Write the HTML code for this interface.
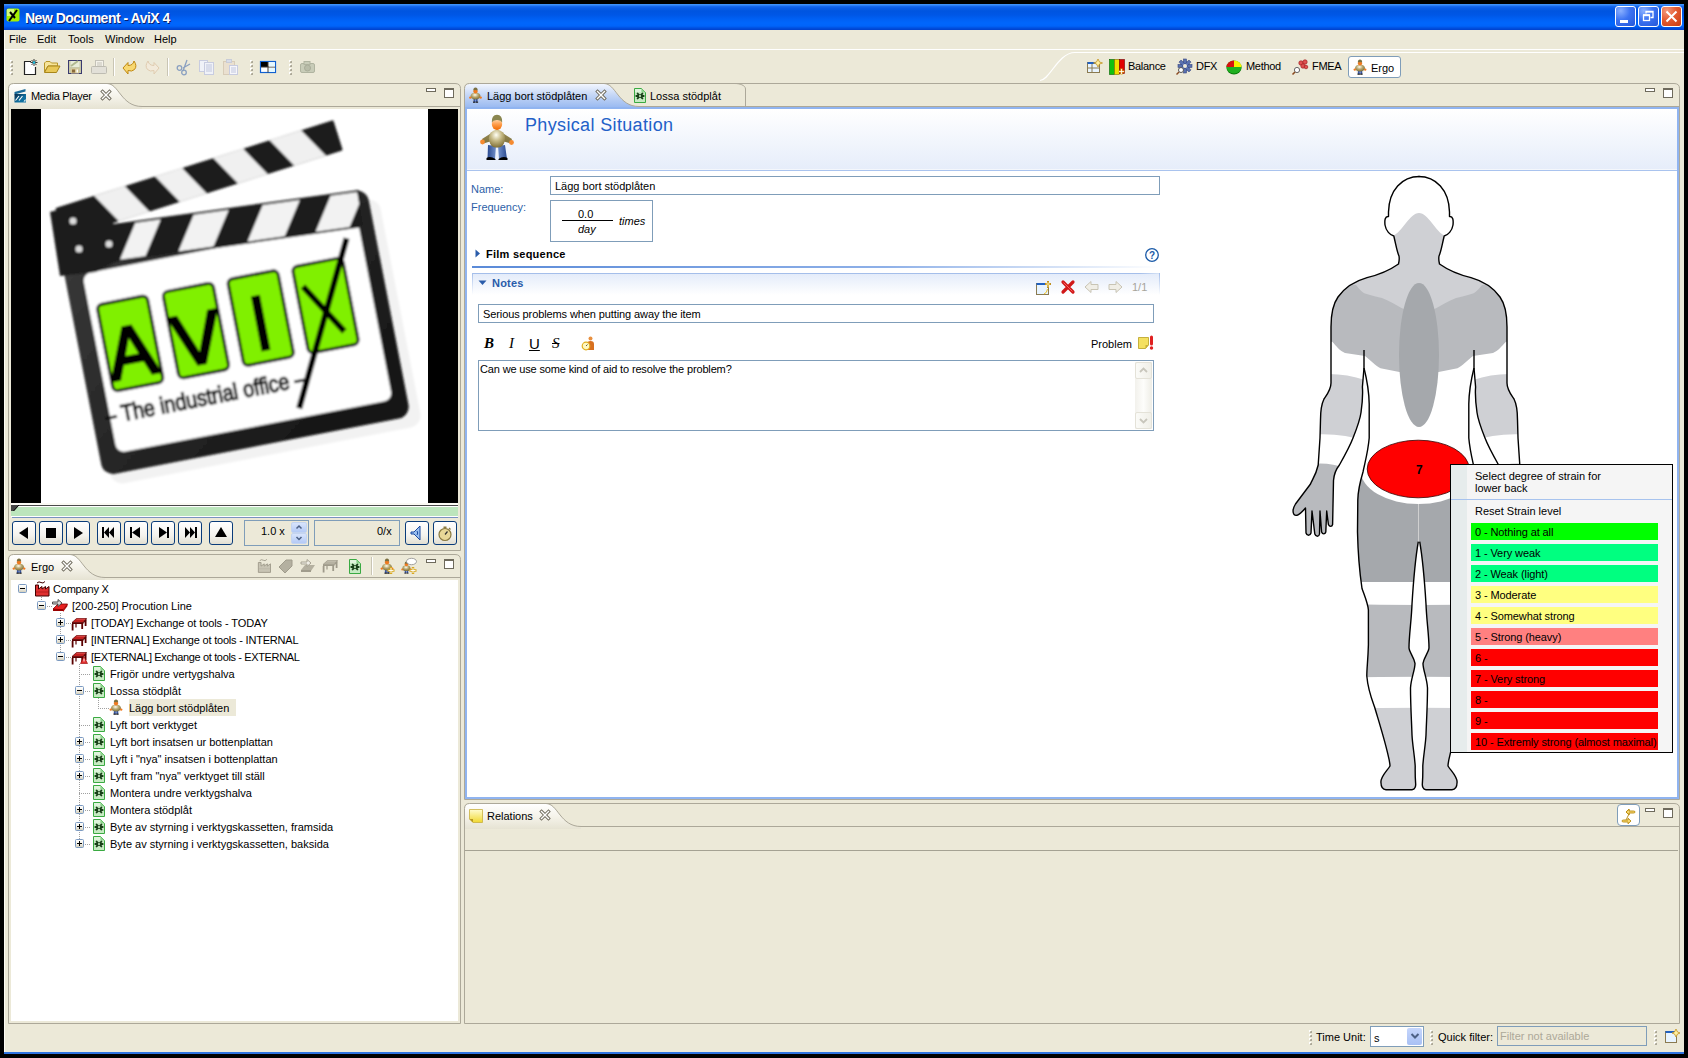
<!DOCTYPE html>
<html><head><meta charset="utf-8">
<style>
*{box-sizing:border-box;margin:0;padding:0}
html,body{width:1688px;height:1058px;overflow:hidden;background:#000}
body{position:relative;font-family:"Liberation Sans",sans-serif;font-size:11px;color:#000}
.a{position:absolute}
.t{position:absolute;white-space:nowrap;line-height:13px}
svg{position:absolute;overflow:visible}
</style></head><body>
<div class="a" style="left:4px;top:4px;width:1680px;height:1050px;background:#ECE9D8;"></div>
<div class="a" style="left:4px;top:30px;width:1px;height:1022px;background:#FCFBF3;"></div>
<div class="a" style="left:4px;top:1052px;width:1680px;height:2px;background:#2F74E0;"></div>
<div class="a" style="left:4px;top:4px;width:1680px;height:26px;background:linear-gradient(#3D90FA 0px,#3D90FA 1px,#1A6CF0 2px,#0A5CE6 4px,#0055E0 7px,#0057E6 11px,#0060F4 15px,#0066FC 19px,#0064FA 22px,#0050E0 24px,#0040CC 26px);"></div>
<svg style="left:6px;top:8px;" width="15" height="15" viewBox="0 0 15 15"><rect x="0.5" y="0.5" width="13" height="13" rx="2" fill="#A6F000"/><rect x="1" y="1" width="7" height="7" fill="#E8FFB0" opacity=".7"/><path d="M3,13 L11,2" stroke="#000" stroke-width="2"/><path d="M4,4 L9,10" stroke="#000" stroke-width="2"/></svg>
<div class="t" style="left:25px;top:10px;font-size:14px;line-height:17px;color:#fff;font-weight:700;text-shadow:1px 1px 0 #0A1E6E;letter-spacing:-.5px;">New Document - AviX 4</div>
<div class="a" style="left:1615px;top:6px;width:21px;height:21px;background:radial-gradient(circle at 25% 20%,#8AB0FF 0,#3C73F2 45%,#2457D8 100%);border:1px solid #fff;border-radius:3px;"></div>
<div class="a" style="left:1638px;top:6px;width:21px;height:21px;background:radial-gradient(circle at 25% 20%,#8AB0FF 0,#3C73F2 45%,#2457D8 100%);border:1px solid #fff;border-radius:3px;"></div>
<div class="a" style="left:1661px;top:6px;width:21px;height:21px;background:radial-gradient(circle at 25% 20%,#F39A7E 0,#E45B32 45%,#C83C10 100%);border:1px solid #fff;border-radius:3px;"></div>
<div class="a" style="left:1620px;top:20px;width:8px;height:3px;background:#fff;"></div>
<svg style="left:1638px;top:6px;" width="21" height="21" viewBox="0 0 21 21"><rect x="5.5" y="9.5" width="6" height="5" fill="none" stroke="#fff" stroke-width="1.3"/><path d="M5,9 h7 M8,7.5 V5.5 h7 v6 h-2.5" fill="none" stroke="#fff" stroke-width="1.3"/><rect x="5" y="8.5" width="7" height="1.5" fill="#fff"/><rect x="8" y="5" width="7" height="1.5" fill="#fff"/></svg>
<svg style="left:1661px;top:6px;" width="21" height="21" viewBox="0 0 21 21"><path d="M5.5,5.5 L15.5,15.5 M15.5,5.5 L5.5,15.5" stroke="#fff" stroke-width="2"/></svg>
<div class="a" style="left:4px;top:49px;width:1680px;height:1px;background:#FFFFFF;"></div>
<div class="t" style="left:9px;top:33px;font-size:11px;line-height:13px;color:#000;">File</div>
<div class="t" style="left:37px;top:33px;font-size:11px;line-height:13px;color:#000;">Edit</div>
<div class="t" style="left:68px;top:33px;font-size:11px;line-height:13px;color:#000;">Tools</div>
<div class="t" style="left:105px;top:33px;font-size:11px;line-height:13px;color:#000;">Window</div>
<div class="t" style="left:154px;top:33px;font-size:11px;line-height:13px;color:#000;">Help</div>
<div class="a" style="left:11px;top:61px;width:2px;height:2px;background:#ACA899;"></div>
<div class="a" style="left:10px;top:60px;width:2px;height:2px;background:#FFFFFF;"></div>
<div class="a" style="left:11px;top:61px;width:1px;height:1px;background:#C8C4B2;"></div>
<div class="a" style="left:11px;top:65px;width:2px;height:2px;background:#ACA899;"></div>
<div class="a" style="left:10px;top:64px;width:2px;height:2px;background:#FFFFFF;"></div>
<div class="a" style="left:11px;top:65px;width:1px;height:1px;background:#C8C4B2;"></div>
<div class="a" style="left:11px;top:69px;width:2px;height:2px;background:#ACA899;"></div>
<div class="a" style="left:10px;top:68px;width:2px;height:2px;background:#FFFFFF;"></div>
<div class="a" style="left:11px;top:69px;width:1px;height:1px;background:#C8C4B2;"></div>
<div class="a" style="left:11px;top:73px;width:2px;height:2px;background:#ACA899;"></div>
<div class="a" style="left:10px;top:72px;width:2px;height:2px;background:#FFFFFF;"></div>
<div class="a" style="left:11px;top:73px;width:1px;height:1px;background:#C8C4B2;"></div>
<svg style="left:23px;top:59px;" width="16" height="16" viewBox="0 0 16 16"><path d="M1.5,2.5 H8 M1.5,2.5 V15.5 H12.5 V8" fill="#fff" stroke="#222"/><rect x="2" y="3" width="10" height="12" fill="#fff"/><path d="M1.5,2.5 H8 M1.5,2.5 V15.5 H12.5 V8" fill="none" stroke="#222" stroke-width="1.2"/><path d="M11,0 V7 M7.5,3.5 H14.5 M8.5,1 L13.5,6 M13.5,1 L8.5,6" stroke="#222" stroke-width=".9"/><circle cx="11" cy="3.5" r="1.3" fill="#20C0E0"/></svg>
<svg style="left:44px;top:59px;" width="17" height="16" viewBox="0 0 17 16"><path d="M0.5,4 L2,2.5 H6 L7.5,4 H13.5 V7 H4 L0.5,13 Z" fill="#F6E49A" stroke="#B8962A"/><path d="M0.5,13.5 L4,7 H16 L12.5,13.5 Z" fill="#E8C858" stroke="#A8861A"/></svg>
<svg style="left:68px;top:59px;" width="15" height="16" viewBox="0 0 15 16"><rect x="0.5" y="1.5" width="13" height="13" fill="#C8C8A8" stroke="#3A3A70"/><rect x="2.5" y="2" width="9" height="6" fill="#E8ECD8"/><path d="M3,7 L10,2" stroke="#B0B890" stroke-width="2"/><rect x="3" y="9.5" width="8" height="5" fill="#D8C898"/><rect x="4" y="10.5" width="3" height="3" fill="#8A6A3A"/><rect x="8.5" y="10.5" width="1.5" height="3" fill="#fff"/></svg>
<svg style="left:91px;top:59px;" width="16" height="16" viewBox="0 0 16 16"><rect x="4.5" y="1.5" width="8" height="6" fill="#F4F2EA" stroke="#C4C2B8"/><rect x="0.5" y="7.5" width="15" height="7" rx="1" fill="#E2E0D8" stroke="#BEBCB2"/><path d="M6,4 H11 M6,6 H11" stroke="#C4C2B8"/></svg>
<div class="a" style="left:113px;top:58px;width:1px;height:18px;background:#C9C5B4;"></div>
<div class="a" style="left:114px;top:58px;width:1px;height:18px;background:#FFFFFF;"></div>
<svg style="left:122px;top:59px;" width="16" height="16" viewBox="0 0 16 16"><path d="M1,9 L6,3.5 V6.5 Q11,6.5 12,2 Q15.5,7 12.5,10.5 Q10,13 6,11.5 V15 Z" fill="#F8D870" stroke="#C08810" stroke-width="1"/></svg>
<svg style="left:144px;top:59px;" width="16" height="16" viewBox="0 0 16 16"><path d="M15,9 L10,3.5 V6.5 Q5,6.5 4,2 Q0.5,7 3.5,10.5 Q6,13 10,11.5 V15 Z" fill="#F2EADA" stroke="#E0CCB0" stroke-width="1"/></svg>
<div class="a" style="left:167px;top:58px;width:1px;height:18px;background:#C9C5B4;"></div>
<div class="a" style="left:168px;top:58px;width:1px;height:18px;background:#FFFFFF;"></div>
<svg style="left:176px;top:59px;" width="15" height="16" viewBox="0 0 15 16"><path d="M7,12 L11,1 M7,9 L14,5" stroke="#8AA0C0" stroke-width="1.3"/><circle cx="3.5" cy="9" r="2.3" fill="none" stroke="#8AA0C0" stroke-width="1.3"/><circle cx="8" cy="13.5" r="2.3" fill="none" stroke="#8AA0C0" stroke-width="1.3"/></svg>
<svg style="left:199px;top:59px;" width="16" height="16" viewBox="0 0 16 16"><rect x="0.5" y="1.5" width="8" height="11" fill="#F0F2F8" stroke="#C8CCE0"/><rect x="5.5" y="3.5" width="9" height="12" fill="#F0F2F8" stroke="#C8CCE0"/><path d="M7,6 H13 M7,8 H13 M7,10 H13 M7,12 H13" stroke="#C0C6DE"/></svg>
<svg style="left:223px;top:59px;" width="16" height="16" viewBox="0 0 16 16"><rect x="0.5" y="2.5" width="11" height="13" fill="#EAE0D0" stroke="#D8CCB8"/><rect x="3.5" y="0.5" width="5" height="3" fill="#D8DCE8" stroke="#C8CCD8"/><rect x="6.5" y="6.5" width="8" height="9" fill="#F6F6FA" stroke="#C8CCE0"/><path d="M8,9 H13 M8,11 H13 M8,13 H13" stroke="#C0C6DE"/></svg>
<div class="a" style="left:251px;top:61px;width:2px;height:2px;background:#ACA899;"></div>
<div class="a" style="left:250px;top:60px;width:2px;height:2px;background:#FFFFFF;"></div>
<div class="a" style="left:251px;top:61px;width:1px;height:1px;background:#C8C4B2;"></div>
<div class="a" style="left:251px;top:65px;width:2px;height:2px;background:#ACA899;"></div>
<div class="a" style="left:250px;top:64px;width:2px;height:2px;background:#FFFFFF;"></div>
<div class="a" style="left:251px;top:65px;width:1px;height:1px;background:#C8C4B2;"></div>
<div class="a" style="left:251px;top:69px;width:2px;height:2px;background:#ACA899;"></div>
<div class="a" style="left:250px;top:68px;width:2px;height:2px;background:#FFFFFF;"></div>
<div class="a" style="left:251px;top:69px;width:1px;height:1px;background:#C8C4B2;"></div>
<div class="a" style="left:251px;top:73px;width:2px;height:2px;background:#ACA899;"></div>
<div class="a" style="left:250px;top:72px;width:2px;height:2px;background:#FFFFFF;"></div>
<div class="a" style="left:251px;top:73px;width:1px;height:1px;background:#C8C4B2;"></div>
<svg style="left:260px;top:61px;" width="16" height="13" viewBox="0 0 16 13"><rect x="0.5" y="0.5" width="15" height="11" fill="#fff" stroke="#1060D0" stroke-width="1.2"/><rect x="1" y="1" width="7" height="5" fill="#000"/><path d="M8,1 V11.5 M1,6 H15" stroke="#403830" stroke-width="1"/><rect x="9" y="1.5" width="6" height="4" fill="#E4F8FF"/><rect x="9" y="7" width="6" height="4" fill="#E4F8FF"/></svg>
<div class="a" style="left:290px;top:61px;width:2px;height:2px;background:#ACA899;"></div>
<div class="a" style="left:289px;top:60px;width:2px;height:2px;background:#FFFFFF;"></div>
<div class="a" style="left:290px;top:61px;width:1px;height:1px;background:#C8C4B2;"></div>
<div class="a" style="left:290px;top:65px;width:2px;height:2px;background:#ACA899;"></div>
<div class="a" style="left:289px;top:64px;width:2px;height:2px;background:#FFFFFF;"></div>
<div class="a" style="left:290px;top:65px;width:1px;height:1px;background:#C8C4B2;"></div>
<div class="a" style="left:290px;top:69px;width:2px;height:2px;background:#ACA899;"></div>
<div class="a" style="left:289px;top:68px;width:2px;height:2px;background:#FFFFFF;"></div>
<div class="a" style="left:290px;top:69px;width:1px;height:1px;background:#C8C4B2;"></div>
<div class="a" style="left:290px;top:73px;width:2px;height:2px;background:#ACA899;"></div>
<div class="a" style="left:289px;top:72px;width:2px;height:2px;background:#FFFFFF;"></div>
<div class="a" style="left:290px;top:73px;width:1px;height:1px;background:#C8C4B2;"></div>
<svg style="left:300px;top:59px;" width="16" height="16" viewBox="0 0 16 16"><rect x="0.5" y="4.5" width="14" height="9" rx="1.5" fill="#C8CCB8" stroke="#B0B4A0"/><rect x="4" y="2.5" width="6" height="3" fill="#C8CCB8" stroke="#B0B4A0"/><circle cx="7.5" cy="9" r="3" fill="#B8BCA8" stroke="#A8AC98"/></svg>
<svg style="left:1036px;top:50px;" width="60" height="34" viewBox="0 0 60 34"><path d="M4,30.5 C14,30 22,2.5 39,2.5 H60" fill="none" stroke="#FFFFFF" stroke-width="1.2"/></svg>
<div class="a" style="left:1095px;top:52px;width:589px;height:1px;background:#FFFFFF;"></div>
<svg style="left:1087px;top:59px;" width="16" height="16" viewBox="0 0 16 16"><rect x="0.5" y="3.5" width="12" height="10" fill="#E8F4FF" stroke="#8A7A50"/><rect x="0.5" y="3" width="9" height="2" fill="#2060C0"/><path d="M5,5 V13 M1,9 H12" stroke="#8A7A50"/><path d="M11,0 L12.5,3 L15.5,4 L12.5,5 L11,8 L9.5,5 L6.5,4 L9.5,3Z" fill="#FFF0A0" stroke="#C09020" stroke-width=".8"/></svg>
<svg style="left:1109px;top:59px;" width="16" height="16" viewBox="0 0 16 16"><rect x="0.5" y="0.5" width="5" height="15" fill="#10C010" stroke="#006000" stroke-width=".6"/><rect x="5.5" y="0.5" width="5" height="15" fill="#F0E000" stroke="#807000" stroke-width=".6"/><rect x="10.5" y="0.5" width="5" height="14" fill="#E00000" stroke="#700000" stroke-width=".6"/><path d="M12.5,9.5 V15.5 M9.5,12.5 H15.5" stroke="#D8A820" stroke-width="2.2"/><path d="M12.5,10 V15 M10,12.5 H15" stroke="#FFF" stroke-width=".8"/></svg>
<div class="t" style="left:1128px;top:60px;font-size:11px;line-height:13px;color:#000;letter-spacing:-.3px;">Balance</div>
<svg style="left:1176px;top:59px;" width="16" height="16" viewBox="0 0 16 16"><g fill="#5870B0" stroke="#384880" stroke-width=".6"><circle cx="9" cy="7" r="4.5"/><rect x="7.5" y="0" width="3" height="14"/><rect x="2" y="5.5" width="14" height="3"/><rect x="7.5" y="0" width="3" height="14" transform="rotate(45 9 7)"/><rect x="7.5" y="0" width="3" height="14" transform="rotate(-45 9 7)"/></g><circle cx="9" cy="7" r="2" fill="#ECE9D8"/><circle cx="5" cy="11" r="2.5" fill="#fff" stroke="#555" stroke-width="1"/><path d="M3,13 L0.5,15.5" stroke="#8A4A20" stroke-width="1.5"/></svg>
<div class="t" style="left:1196px;top:60px;font-size:11px;line-height:13px;color:#000;letter-spacing:-.3px;">DFX</div>
<svg style="left:1226px;top:59px;" width="16" height="16" viewBox="0 0 16 16"><ellipse cx="8" cy="9" rx="7.5" ry="6.5" fill="#0A7A0A"/><ellipse cx="8" cy="8" rx="7.5" ry="6.5" fill="#20B020"/><path d="M8,8 L8,1.5 A7.5,6.5 0 0 1 15.5,8 Z" fill="#F8F000"/><path d="M8,8 L0.5,8 A7.5,6.5 0 0 1 8,1.5 Z" fill="#D81010"/></svg>
<div class="t" style="left:1246px;top:60px;font-size:11px;line-height:13px;color:#000;letter-spacing:-.3px;">Method</div>
<svg style="left:1292px;top:59px;" width="16" height="16" viewBox="0 0 16 16"><g fill="#E05050" stroke="#A02020" stroke-width=".7"><circle cx="9" cy="4" r="2.2"/><circle cx="13" cy="3" r="2.2"/><circle cx="11" cy="7" r="2.2"/><circle cx="14" cy="8" r="1.8"/></g><circle cx="5" cy="11" r="2.6" fill="#fff" stroke="#666" stroke-width="1"/><path d="M3,13 L0.5,15.5" stroke="#8A4A20" stroke-width="1.6"/></svg>
<div class="t" style="left:1312px;top:60px;font-size:11px;line-height:13px;color:#000;letter-spacing:-.3px;">FMEA</div>
<div class="a" style="left:1348px;top:56px;width:53px;height:22px;background:#FFFFFF;border:1px solid #7F9DB9;border-radius:3px;"></div>
<svg style="left:1352px;top:59px;" width="16" height="16" viewBox="0 0 16 16"><g transform="scale(1.0)"><defs><radialGradient id="pb16" cx=".45" cy=".35" r=".7"><stop offset="0" stop-color="#FFFDF0"/><stop offset=".45" stop-color="#B8A870"/><stop offset="1" stop-color="#6E6230"/></radialGradient></defs>
<path d="M5.2,12 L5.6,15 M10.8,12 L10.4,15" stroke="#C8C8C8" stroke-width=".8"/>
<rect x="6" y="11.5" width="1.8" height="3.5" fill="#3858A8"/><rect x="8.3" y="11.5" width="1.8" height="3.5" fill="#3858A8"/>
<rect x="5.5" y="14.6" width="2.4" height="1.2" fill="#202020"/><rect x="8.2" y="14.6" width="2.4" height="1.2" fill="#202020"/>
<ellipse cx="8" cy="9" rx="5" ry="3.6" fill="url(#pb16)"/>
<circle cx="2.8" cy="10.6" r="1.2" fill="#F07A20"/><circle cx="13.2" cy="10.6" r="1.2" fill="#F07A20"/>
<ellipse cx="8" cy="4.2" rx="2.1" ry="2.4" fill="#F07A20"/>
<path d="M5.8,3.6 Q5.8,0.6 8,0.6 Q10.2,0.6 10.2,3.6 Q8,2.6 5.8,3.6Z" fill="#7C7040"/></g></svg>
<div class="t" style="left:1371px;top:62px;font-size:11px;line-height:13px;color:#000;">Ergo</div>
<div class="a" style="left:1310px;top:1031px;width:2px;height:2px;background:#ACA899;"></div>
<div class="a" style="left:1309px;top:1030px;width:2px;height:2px;background:#FFFFFF;"></div>
<div class="a" style="left:1310px;top:1031px;width:1px;height:1px;background:#C8C4B2;"></div>
<div class="a" style="left:1310px;top:1035px;width:2px;height:2px;background:#ACA899;"></div>
<div class="a" style="left:1309px;top:1034px;width:2px;height:2px;background:#FFFFFF;"></div>
<div class="a" style="left:1310px;top:1035px;width:1px;height:1px;background:#C8C4B2;"></div>
<div class="a" style="left:1310px;top:1039px;width:2px;height:2px;background:#ACA899;"></div>
<div class="a" style="left:1309px;top:1038px;width:2px;height:2px;background:#FFFFFF;"></div>
<div class="a" style="left:1310px;top:1039px;width:1px;height:1px;background:#C8C4B2;"></div>
<div class="a" style="left:1310px;top:1043px;width:2px;height:2px;background:#ACA899;"></div>
<div class="a" style="left:1309px;top:1042px;width:2px;height:2px;background:#FFFFFF;"></div>
<div class="a" style="left:1310px;top:1043px;width:1px;height:1px;background:#C8C4B2;"></div>
<div class="t" style="left:1316px;top:1031px;font-size:11px;line-height:13px;color:#000;">Time Unit:</div>
<div class="a" style="left:1370px;top:1026px;width:54px;height:21px;background:#fff;border:1px solid #7F9DB9;"></div>
<div class="a" style="left:1407px;top:1028px;width:15px;height:17px;background:linear-gradient(#C6D6FC,#A8C0F4);border-radius:2px;"></div>
<svg style="left:1410px;top:1032px;" width="10" height="8" viewBox="0 0 10 8"><path d="M1.5,2 L5,5.5 L8.5,2" fill="none" stroke="#4D6185" stroke-width="2"/></svg>
<div class="t" style="left:1374px;top:1032px;font-size:11px;line-height:13px;color:#000;">s</div>
<div class="a" style="left:1431px;top:1031px;width:2px;height:2px;background:#ACA899;"></div>
<div class="a" style="left:1430px;top:1030px;width:2px;height:2px;background:#FFFFFF;"></div>
<div class="a" style="left:1431px;top:1031px;width:1px;height:1px;background:#C8C4B2;"></div>
<div class="a" style="left:1431px;top:1035px;width:2px;height:2px;background:#ACA899;"></div>
<div class="a" style="left:1430px;top:1034px;width:2px;height:2px;background:#FFFFFF;"></div>
<div class="a" style="left:1431px;top:1035px;width:1px;height:1px;background:#C8C4B2;"></div>
<div class="a" style="left:1431px;top:1039px;width:2px;height:2px;background:#ACA899;"></div>
<div class="a" style="left:1430px;top:1038px;width:2px;height:2px;background:#FFFFFF;"></div>
<div class="a" style="left:1431px;top:1039px;width:1px;height:1px;background:#C8C4B2;"></div>
<div class="a" style="left:1431px;top:1043px;width:2px;height:2px;background:#ACA899;"></div>
<div class="a" style="left:1430px;top:1042px;width:2px;height:2px;background:#FFFFFF;"></div>
<div class="a" style="left:1431px;top:1043px;width:1px;height:1px;background:#C8C4B2;"></div>
<div class="t" style="left:1438px;top:1031px;font-size:11px;line-height:13px;color:#000;">Quick filter:</div>
<div class="a" style="left:1497px;top:1026px;width:150px;height:20px;background:#ECE9D8;border:1px solid #7F9DB9;"></div>
<div class="t" style="left:1500px;top:1030px;font-size:11px;line-height:13px;color:#ACA899;">Filter not available</div>
<div class="a" style="left:1655px;top:1031px;width:2px;height:2px;background:#ACA899;"></div>
<div class="a" style="left:1654px;top:1030px;width:2px;height:2px;background:#FFFFFF;"></div>
<div class="a" style="left:1655px;top:1031px;width:1px;height:1px;background:#C8C4B2;"></div>
<div class="a" style="left:1655px;top:1035px;width:2px;height:2px;background:#ACA899;"></div>
<div class="a" style="left:1654px;top:1034px;width:2px;height:2px;background:#FFFFFF;"></div>
<div class="a" style="left:1655px;top:1035px;width:1px;height:1px;background:#C8C4B2;"></div>
<div class="a" style="left:1655px;top:1039px;width:2px;height:2px;background:#ACA899;"></div>
<div class="a" style="left:1654px;top:1038px;width:2px;height:2px;background:#FFFFFF;"></div>
<div class="a" style="left:1655px;top:1039px;width:1px;height:1px;background:#C8C4B2;"></div>
<div class="a" style="left:1655px;top:1043px;width:2px;height:2px;background:#ACA899;"></div>
<div class="a" style="left:1654px;top:1042px;width:2px;height:2px;background:#FFFFFF;"></div>
<div class="a" style="left:1655px;top:1043px;width:1px;height:1px;background:#C8C4B2;"></div>
<svg style="left:1665px;top:1029px;" width="15" height="15" viewBox="0 0 15 15"><rect x="0.5" y="2.5" width="11" height="11" fill="#E8F4FF" stroke="#8A7A50"/><rect x="0.5" y="2" width="9" height="2" fill="#2060C0"/><path d="M11,0 L12.5,3 L15,4 L12.5,5 L11,8 L9.5,5 L7,4 L9.5,3Z" fill="#FFF0A0" stroke="#C09020" stroke-width=".8"/></svg>
<svg style="left:8px;top:83px;" width="453" height="468" viewBox="0 0 453 468"><defs><linearGradient id="g1" x1="0" y1="0" x2="0" y2="1"><stop offset="0" stop-color="#FFFFFF"/><stop offset=".5" stop-color="#F5F3EA"/><stop offset="1" stop-color="#E6E3D3"/></linearGradient></defs><path d="M1,26 V6 Q1,1 6,1 H99 C111,1 113,23 134,23.5 V26 Z" fill="url(#g1)"/><path d="M0.5,467.5 V5.5 Q0.5,0.5 5.5,0.5 H447 Q452.5,0.5 452.5,5.5 V467.5 H0.5" fill="none" stroke="#ACA899" stroke-width="1"/><path d="M99,0.5 C111,0.5 113,23.5 134,23.5 H452" fill="none" stroke="#ACA899" stroke-width="1"/></svg>
<svg style="left:426px;top:88px;" width="30" height="11" viewBox="0 0 30 11"><rect x="0.5" y="0.5" width="9" height="3" fill="#fff" stroke="#6E6A5C"/><rect x="18.5" y="0.5" width="9" height="9" fill="#fff" stroke="#6E6A5C"/><rect x="18" y="1" width="10" height="1" fill="#6E6A5C"/></svg>
<svg style="left:101px;top:90px;" width="10" height="10" viewBox="0 0 10 10"><path d="M1.5,1.5 L8.5,8.5 M8.5,1.5 L1.5,8.5" stroke="#6E6A5C" stroke-width="3.2" stroke-linecap="square"/><path d="M1.5,1.5 L8.5,8.5 M8.5,1.5 L1.5,8.5" stroke="#fff" stroke-width="1.4" stroke-linecap="square"/></svg>
<div class="t" style="left:31px;top:90px;font-size:11px;line-height:13px;color:#000;letter-spacing:-.3px;">Media Player</div>
<svg style="left:8px;top:554px;" width="453" height="470" viewBox="0 0 453 470"><defs><linearGradient id="g2" x1="0" y1="0" x2="0" y2="1"><stop offset="0" stop-color="#FFFFFF"/><stop offset=".5" stop-color="#F5F3EA"/><stop offset="1" stop-color="#E6E3D3"/></linearGradient></defs><path d="M1,26 V6 Q1,1 6,1 H62 C74,1 76,23 97,23.5 V26 Z" fill="url(#g2)"/><path d="M0.5,469.5 V5.5 Q0.5,0.5 5.5,0.5 H447 Q452.5,0.5 452.5,5.5 V469.5 H0.5" fill="none" stroke="#ACA899" stroke-width="1"/><path d="M62,0.5 C74,0.5 76,23.5 97,23.5 H452" fill="none" stroke="#ACA899" stroke-width="1"/></svg>
<svg style="left:426px;top:559px;" width="30" height="11" viewBox="0 0 30 11"><rect x="0.5" y="0.5" width="9" height="3" fill="#fff" stroke="#6E6A5C"/><rect x="18.5" y="0.5" width="9" height="9" fill="#fff" stroke="#6E6A5C"/><rect x="18" y="1" width="10" height="1" fill="#6E6A5C"/></svg>
<svg style="left:62px;top:561px;" width="10" height="10" viewBox="0 0 10 10"><path d="M1.5,1.5 L8.5,8.5 M8.5,1.5 L1.5,8.5" stroke="#6E6A5C" stroke-width="3.2" stroke-linecap="square"/><path d="M1.5,1.5 L8.5,8.5 M8.5,1.5 L1.5,8.5" stroke="#fff" stroke-width="1.4" stroke-linecap="square"/></svg>
<div class="t" style="left:31px;top:561px;font-size:11px;line-height:13px;color:#000;">Ergo</div>
<div class="a" style="left:11px;top:580px;width:447px;height:441px;background:#fff;"></div>
<svg style="left:464px;top:83px;" width="1216" height="717" viewBox="0 0 1216 717"><defs><linearGradient id="g3" x1="0" y1="0" x2="0" y2="1"><stop offset="0" stop-color="#F2F6FE"/><stop offset=".45" stop-color="#C4D6F6"/><stop offset="1" stop-color="#94B6F0"/></linearGradient></defs><path d="M1,26 V6 Q1,1 6,1 H140 C152,1 154,23 175,23.5 V26 Z" fill="url(#g3)"/><path d="M0.5,716.5 V5.5 Q0.5,0.5 5.5,0.5 H1210 Q1215.5,0.5 1215.5,5.5 V716.5 H0.5" fill="none" stroke="#ACA899" stroke-width="1"/><path d="M140,0.5 C152,0.5 154,23.5 175,23.5 H1215" fill="none" stroke="#ACA899" stroke-width="1"/></svg>
<div class="a" style="left:465px;top:107px;width:214px;height:2px;background:#90B4F0;"></div>
<div class="a" style="left:679px;top:107px;width:1000px;height:2px;background:#90B4F0;"></div>
<div class="a" style="left:465px;top:107px;width:2px;height:692px;background:#90B4F0;"></div>
<div class="a" style="left:1677px;top:107px;width:2px;height:692px;background:#90B4F0;"></div>
<div class="a" style="left:465px;top:797px;width:1214px;height:2px;background:#90B4F0;"></div>
<div class="a" style="left:467px;top:109px;width:1210px;height:688px;background:#fff;"></div>
<svg style="left:1645px;top:88px;" width="30" height="11" viewBox="0 0 30 11"><rect x="0.5" y="0.5" width="9" height="3" fill="#fff" stroke="#6E6A5C"/><rect x="18.5" y="0.5" width="9" height="9" fill="#fff" stroke="#6E6A5C"/><rect x="18" y="1" width="10" height="1" fill="#6E6A5C"/></svg>
<svg style="left:596px;top:90px;" width="10" height="10" viewBox="0 0 10 10"><path d="M1.5,1.5 L8.5,8.5 M8.5,1.5 L1.5,8.5" stroke="#6E6A5C" stroke-width="3.2" stroke-linecap="square"/><path d="M1.5,1.5 L8.5,8.5 M8.5,1.5 L1.5,8.5" stroke="#fff" stroke-width="1.4" stroke-linecap="square"/></svg>
<div class="t" style="left:487px;top:90px;font-size:11px;line-height:13px;color:#000;">Lägg bort stödplåten</div>
<div class="t" style="left:650px;top:90px;font-size:11px;line-height:13px;color:#000;">Lossa stödplåt</div>
<svg style="left:735px;top:83px;" width="12" height="24" viewBox="0 0 12 24"><path d="M0,0.5 C4,0.5 10.5,2 10.5,6 V23" fill="none" stroke="#ACA899"/></svg>
<svg style="left:464px;top:803px;" width="1216" height="221" viewBox="0 0 1216 221"><defs><linearGradient id="g4" x1="0" y1="0" x2="0" y2="1"><stop offset="0" stop-color="#FFFFFF"/><stop offset=".5" stop-color="#F5F3EA"/><stop offset="1" stop-color="#E6E3D3"/></linearGradient></defs><path d="M1,26 V6 Q1,1 6,1 H82 C94,1 96,23 117,23.5 V26 Z" fill="url(#g4)"/><path d="M0.5,220.5 V5.5 Q0.5,0.5 5.5,0.5 H1210 Q1215.5,0.5 1215.5,5.5 V220.5 H0.5" fill="none" stroke="#ACA899" stroke-width="1"/><path d="M82,0.5 C94,0.5 96,23.5 117,23.5 H1215" fill="none" stroke="#ACA899" stroke-width="1"/></svg>
<svg style="left:1645px;top:808px;" width="30" height="11" viewBox="0 0 30 11"><rect x="0.5" y="0.5" width="9" height="3" fill="#fff" stroke="#6E6A5C"/><rect x="18.5" y="0.5" width="9" height="9" fill="#fff" stroke="#6E6A5C"/><rect x="18" y="1" width="10" height="1" fill="#6E6A5C"/></svg>
<svg style="left:540px;top:810px;" width="10" height="10" viewBox="0 0 10 10"><path d="M1.5,1.5 L8.5,8.5 M8.5,1.5 L1.5,8.5" stroke="#6E6A5C" stroke-width="3.2" stroke-linecap="square"/><path d="M1.5,1.5 L8.5,8.5 M8.5,1.5 L1.5,8.5" stroke="#fff" stroke-width="1.4" stroke-linecap="square"/></svg>
<div class="t" style="left:487px;top:810px;font-size:11px;line-height:13px;color:#000;">Relations</div>
<div class="a" style="left:465px;top:850px;width:1213px;height:1px;background:#A5A293;"></div>
<div class="a" style="left:1617px;top:804px;width:23px;height:22px;background:#fff;border:1px solid #7F9DB9;border-radius:4px;"></div>
<svg style="left:1621px;top:808px;" width="15" height="15" viewBox="0 0 15 15"><path d="M13.5,3.5 H8 V1 L5,4 L8,7 V4.8" fill="#F8D870" stroke="#B88A10" stroke-width=".9"/><path d="M8,1.2 L5,4 L8,6.8 V5 H12.5 Q14,5 14,4 Q14,3 12.5,3 H8Z" fill="#F8D870" stroke="#B88A10" stroke-width=".9"/><path d="M7,10.2 L10,13 L7,15.8 V14 H2.5 Q1,14 1,13 Q1,12 2.5,12 H7Z" fill="#F8D870" stroke="#B88A10" stroke-width=".9"/><path d="M5,12 L8,6" stroke="#B88A10" stroke-width=".9"/></svg>
<svg style="left:469px;top:809px;" width="15" height="14" viewBox="0 0 15 14"><defs><linearGradient id="rel" x1="0" y1="0" x2="0" y2="1"><stop offset="0" stop-color="#FFFCD0"/><stop offset="1" stop-color="#F0D830"/></linearGradient></defs><path d="M0.5,0.5 H13.5 V13.5 H4 L0.5,10Z" fill="url(#rel)" stroke="#C8B040" stroke-width=".8"/><path d="M0.5,10 H4 V13.5Z" fill="#B89820"/></svg>
<div class="a" style="left:11px;top:109px;width:447px;height:394px;background:#000;"></div>
<div class="a" style="left:41px;top:109px;width:387px;height:394px;background:#fff;"></div>
<svg style="left:41px;top:109px;overflow:hidden;" width="387" height="394" viewBox="0 0 387 394"><defs><filter id="bl" x="-5%" y="-5%" width="110%" height="110%"><feGaussianBlur stdDeviation="0.9"/></filter><linearGradient id="bd" x1="0" y1="0" x2="1" y2="1"><stop offset="0" stop-color="#3A3A3A"/><stop offset="1" stop-color="#111"/></linearGradient><clipPath id="stk"><rect x="0" y="0" width="292" height="32" rx="2"/></clipPath><clipPath id="stb"><path d="M106,226 L358,191 L364,226 L118,261Z"/></clipPath></defs><g filter="url(#bl)" transform="translate(-41,-109)"><g transform="rotate(-11 237 340)"><rect x="84" y="222" width="316" height="232" rx="12" fill="#000" opacity=".05" transform="translate(3,5)"/><rect x="80" y="216" width="313" height="232" rx="12" fill="url(#bd)"/><rect x="97" y="245" width="282" height="184" rx="9" fill="#fff" stroke="#333" stroke-width="1.5"/><rect x="106" y="279" width="51" height="88" rx="5" fill="#80F000" stroke="#111" stroke-width="3"/><rect x="173" y="279" width="51" height="88" rx="5" fill="#80F000" stroke="#111" stroke-width="3"/><rect x="239" y="279" width="51" height="88" rx="5" fill="#80F000" stroke="#111" stroke-width="3"/><rect x="305" y="279" width="51" height="88" rx="5" fill="#80F000" stroke="#111" stroke-width="3"/><text x="131" y="356" font-family="Liberation Sans" font-size="72" text-anchor="middle" fill="#000" stroke="#000" stroke-width="3.6">A</text><text x="198" y="356" font-family="Liberation Sans" font-size="72" text-anchor="middle" fill="#000" stroke="#000" stroke-width="3.6">V</text><rect x="259" y="300" width="9" height="56" fill="#000"/><path d="M312,300 L344,352" stroke="#000" stroke-width="6"/><path d="M364,261 L285,419" stroke="#000" stroke-width="6"/><text x="195" y="398" font-family="Liberation Sans" font-size="23" text-anchor="middle" fill="#111" stroke="#111" stroke-width="1.3" transform="translate(195 0) scale(.86 1) translate(-195 0)">– The industrial office –</text></g><g clip-path="url(#stb)"><rect x="100" y="185" width="270" height="80" fill="#F2F2F2"/><path d="M90,262 L119,262 L149,190 L120,190Z" fill="#1C1C1C"/><path d="M143,262 L174,262 L204,190 L173,190Z" fill="#1C1C1C"/><path d="M207,262 L239,262 L269,190 L237,190Z" fill="#1C1C1C"/><path d="M274,262 L303,262 L333,190 L304,190Z" fill="#1C1C1C"/><path d="M335,262 L362,262 L392,190 L365,190Z" fill="#1C1C1C"/></g><path d="M106,226 L358,191 L364,226 L118,261Z" fill="none" stroke="#222" stroke-width="2"/><path d="M50,212 L108,196 L120,260 L96,272 L60,276 Z" fill="#1E1E1E"/><g transform="translate(55,208) rotate(-17.56)"><g clip-path="url(#stk)"><rect x="0" y="0" width="292" height="32" fill="#1C1C1C"/><path d="M41,0 H73 L89,32 H57Z" fill="#F0F0F0"/><path d="M105,0 H133 L149,32 H121Z" fill="#F0F0F0"/><path d="M166,0 H197 L213,32 H182Z" fill="#F0F0F0"/><path d="M225,0 H258 L274,32 H241Z" fill="#F0F0F0"/></g></g><circle cx="73" cy="221" r="3.5" fill="#ddd"/><circle cx="79" cy="249" r="3.5" fill="#ddd"/><circle cx="109" cy="244" r="3.5" fill="#ddd"/></g></svg>
<div class="a" style="left:11px;top:503px;width:447px;height:2px;background:#FBFAF4;"></div>
<div class="a" style="left:11px;top:505px;width:447px;height:1px;background:#4A4A4A;"></div>
<div class="a" style="left:11px;top:506px;width:447px;height:1px;background:#fff;"></div>
<div class="a" style="left:11px;top:507px;width:447px;height:9px;background:#BCE5BC;"></div>
<div class="a" style="left:11px;top:516px;width:447px;height:1px;background:#fff;"></div>
<div class="a" style="left:12px;top:517px;width:446px;height:1px;background:#7891C0;"></div>
<svg style="left:11px;top:505px;" width="9" height="7" viewBox="0 0 9 7"><path d="M0,0 H8 L3,6 H0 Z" fill="#444"/><path d="M8,0 L2.5,6" stroke="#000" stroke-width="1"/></svg>
<div class="a" style="left:12px;top:521px;width:24px;height:24px;background:linear-gradient(#FFFFFF,#F4F3EE 60%,#E2DFD2);border:1px solid #0A3C7A;border-radius:3px;"></div>
<svg style="left:12px;top:521px;" width="24" height="24" viewBox="0 0 24 24"><path d="M7,12 L16,6 V18 Z" fill="#000"/></svg>
<div class="a" style="left:39px;top:521px;width:24px;height:24px;background:linear-gradient(#FFFFFF,#F4F3EE 60%,#E2DFD2);border:1px solid #0A3C7A;border-radius:3px;"></div>
<svg style="left:39px;top:521px;" width="24" height="24" viewBox="0 0 24 24"><rect x="7" y="7" width="10" height="10" fill="#000"/></svg>
<div class="a" style="left:66px;top:521px;width:24px;height:24px;background:linear-gradient(#FFFFFF,#F4F3EE 60%,#E2DFD2);border:1px solid #0A3C7A;border-radius:3px;"></div>
<svg style="left:66px;top:521px;" width="24" height="24" viewBox="0 0 24 24"><path d="M17,12 L8,6 V18 Z" fill="#000"/></svg>
<div class="a" style="left:97px;top:521px;width:24px;height:24px;background:linear-gradient(#FFFFFF,#F4F3EE 60%,#E2DFD2);border:1px solid #0A3C7A;border-radius:3px;"></div>
<svg style="left:97px;top:521px;" width="24" height="24" viewBox="0 0 24 24"><rect x="5" y="6" width="2" height="11" fill="#000"/><path d="M7,11.5 L12,6 V17 Z M12,11.5 L17,6 V17 Z" fill="#000"/></svg>
<div class="a" style="left:124px;top:521px;width:24px;height:24px;background:linear-gradient(#FFFFFF,#F4F3EE 60%,#E2DFD2);border:1px solid #0A3C7A;border-radius:3px;"></div>
<svg style="left:124px;top:521px;" width="24" height="24" viewBox="0 0 24 24"><rect x="6" y="6" width="2" height="11" fill="#000"/><path d="M8,11.5 L16,6 V17 Z" fill="#000"/></svg>
<div class="a" style="left:151px;top:521px;width:24px;height:24px;background:linear-gradient(#FFFFFF,#F4F3EE 60%,#E2DFD2);border:1px solid #0A3C7A;border-radius:3px;"></div>
<svg style="left:151px;top:521px;" width="24" height="24" viewBox="0 0 24 24"><rect x="16" y="6" width="2" height="11" fill="#000"/><path d="M16,11.5 L8,6 V17 Z" fill="#000"/></svg>
<div class="a" style="left:178px;top:521px;width:24px;height:24px;background:linear-gradient(#FFFFFF,#F4F3EE 60%,#E2DFD2);border:1px solid #0A3C7A;border-radius:3px;"></div>
<svg style="left:178px;top:521px;" width="24" height="24" viewBox="0 0 24 24"><rect x="17" y="6" width="2" height="11" fill="#000"/><path d="M17,11.5 L12,6 V17 Z M12,11.5 L7,6 V17 Z" fill="#000"/></svg>
<div class="a" style="left:209px;top:521px;width:24px;height:24px;background:linear-gradient(#FFFFFF,#F4F3EE 60%,#E2DFD2);border:1px solid #0A3C7A;border-radius:3px;"></div>
<svg style="left:209px;top:521px;" width="24" height="24" viewBox="0 0 24 24"><path d="M12,6 L18,16 H6 Z" fill="#000"/></svg>
<div class="a" style="left:244px;top:520px;width:65px;height:26px;background:#ECE9D8;border:1px solid #7F9DB9;"></div>
<div class="t" style="left:261px;top:525px;font-size:11px;line-height:13px;color:#000;">1.0 x</div>
<div class="a" style="left:291px;top:522px;width:16px;height:11px;background:linear-gradient(#D8E4FC,#B4CAF6);border:1px solid #C4D4F0;border-radius:2px;"></div>
<div class="a" style="left:291px;top:533px;width:16px;height:11px;background:linear-gradient(#D8E4FC,#B4CAF6);border:1px solid #C4D4F0;border-radius:2px;"></div>
<svg style="left:291px;top:522px;" width="16" height="22" viewBox="0 0 16 22"><path d="M5.5,6.5 L8,4 L10.5,6.5" fill="none" stroke="#4D6185" stroke-width="1.5"/><path d="M5.5,15 L8,17.5 L10.5,15" fill="none" stroke="#4D6185" stroke-width="1.5"/></svg>
<div class="a" style="left:314px;top:520px;width:86px;height:26px;background:#ECE9D8;border:1px solid #7F9DB9;"></div>
<div class="t" style="left:377px;top:525px;font-size:11px;line-height:13px;color:#000;">0/x</div>
<div class="a" style="left:405px;top:521px;width:24px;height:24px;background:linear-gradient(#FFFFFF,#F4F3EE 60%,#E2DFD2);border:1px solid #0A3C7A;border-radius:3px;"></div>
<svg style="left:405px;top:521px;" width="24" height="24" viewBox="0 0 24 24"><path d="M6,11 H9 L15,5 V19 L9,13 H6 Z" fill="#9CC0F0" stroke="#1848A0" stroke-width="1"/><path d="M12,10 Q13.5,12 12,14" stroke="#1848A0" fill="none"/></svg>
<div class="a" style="left:433px;top:521px;width:24px;height:24px;background:linear-gradient(#FFFFFF,#F4F3EE 60%,#E2DFD2);border:1px solid #0A3C7A;border-radius:3px;"></div>
<svg style="left:433px;top:521px;" width="24" height="24" viewBox="0 0 24 24"><circle cx="12" cy="13.5" r="6" fill="#E8D898" stroke="#8A7A40" stroke-width="1.2"/><path d="M12,13.5 L14.5,10.5" stroke="#333" stroke-width="1.2"/><rect x="10.5" y="5.5" width="3" height="2" fill="#8A7A40"/><path d="M16,7 L17.5,8.5" stroke="#8A7A40" stroke-width="1.2"/></svg>
<svg style="left:14px;top:89px;" width="13" height="14" viewBox="0 0 13 14"><defs><linearGradient id="mpi" x1="0" y1="0" x2="1" y2="1"><stop offset="0" stop-color="#0A2A4A"/><stop offset=".6" stop-color="#1070A0"/></linearGradient></defs><path d="M0.5,3 L11.5,0 V2.5 L0.5,5.5Z" fill="#1A6A98"/><rect x="0.5" y="5" width="11.5" height="8.5" fill="url(#mpi)"/><path d="M1.5,11.5 L5,7 M5,11.5 L8.5,7" stroke="#fff" stroke-width="1.1"/><path d="M9.5,12.5 L11.5,10 V12.5Z" fill="#fff"/></svg>
<div class="a" style="left:41px;top:597px;width:1px;height:1px;background:#A0A0A0;"></div>
<div class="a" style="left:41px;top:599px;width:1px;height:1px;background:#A0A0A0;"></div>
<div class="a" style="left:41px;top:601px;width:1px;height:1px;background:#A0A0A0;"></div>
<div class="a" style="left:41px;top:603px;width:1px;height:1px;background:#A0A0A0;"></div>
<div class="a" style="left:41px;top:605px;width:1px;height:1px;background:#A0A0A0;"></div>
<div class="a" style="left:60px;top:613px;width:1px;height:1px;background:#A0A0A0;"></div>
<div class="a" style="left:60px;top:615px;width:1px;height:1px;background:#A0A0A0;"></div>
<div class="a" style="left:60px;top:617px;width:1px;height:1px;background:#A0A0A0;"></div>
<div class="a" style="left:60px;top:619px;width:1px;height:1px;background:#A0A0A0;"></div>
<div class="a" style="left:60px;top:621px;width:1px;height:1px;background:#A0A0A0;"></div>
<div class="a" style="left:60px;top:623px;width:1px;height:1px;background:#A0A0A0;"></div>
<div class="a" style="left:60px;top:625px;width:1px;height:1px;background:#A0A0A0;"></div>
<div class="a" style="left:60px;top:627px;width:1px;height:1px;background:#A0A0A0;"></div>
<div class="a" style="left:60px;top:629px;width:1px;height:1px;background:#A0A0A0;"></div>
<div class="a" style="left:60px;top:631px;width:1px;height:1px;background:#A0A0A0;"></div>
<div class="a" style="left:60px;top:633px;width:1px;height:1px;background:#A0A0A0;"></div>
<div class="a" style="left:60px;top:635px;width:1px;height:1px;background:#A0A0A0;"></div>
<div class="a" style="left:60px;top:637px;width:1px;height:1px;background:#A0A0A0;"></div>
<div class="a" style="left:60px;top:639px;width:1px;height:1px;background:#A0A0A0;"></div>
<div class="a" style="left:60px;top:641px;width:1px;height:1px;background:#A0A0A0;"></div>
<div class="a" style="left:60px;top:643px;width:1px;height:1px;background:#A0A0A0;"></div>
<div class="a" style="left:60px;top:645px;width:1px;height:1px;background:#A0A0A0;"></div>
<div class="a" style="left:60px;top:647px;width:1px;height:1px;background:#A0A0A0;"></div>
<div class="a" style="left:60px;top:649px;width:1px;height:1px;background:#A0A0A0;"></div>
<div class="a" style="left:60px;top:651px;width:1px;height:1px;background:#A0A0A0;"></div>
<div class="a" style="left:60px;top:653px;width:1px;height:1px;background:#A0A0A0;"></div>
<div class="a" style="left:60px;top:655px;width:1px;height:1px;background:#A0A0A0;"></div>
<div class="a" style="left:79px;top:664px;width:1px;height:1px;background:#A0A0A0;"></div>
<div class="a" style="left:79px;top:666px;width:1px;height:1px;background:#A0A0A0;"></div>
<div class="a" style="left:79px;top:668px;width:1px;height:1px;background:#A0A0A0;"></div>
<div class="a" style="left:79px;top:670px;width:1px;height:1px;background:#A0A0A0;"></div>
<div class="a" style="left:79px;top:672px;width:1px;height:1px;background:#A0A0A0;"></div>
<div class="a" style="left:79px;top:674px;width:1px;height:1px;background:#A0A0A0;"></div>
<div class="a" style="left:79px;top:676px;width:1px;height:1px;background:#A0A0A0;"></div>
<div class="a" style="left:79px;top:678px;width:1px;height:1px;background:#A0A0A0;"></div>
<div class="a" style="left:79px;top:680px;width:1px;height:1px;background:#A0A0A0;"></div>
<div class="a" style="left:79px;top:682px;width:1px;height:1px;background:#A0A0A0;"></div>
<div class="a" style="left:79px;top:684px;width:1px;height:1px;background:#A0A0A0;"></div>
<div class="a" style="left:79px;top:686px;width:1px;height:1px;background:#A0A0A0;"></div>
<div class="a" style="left:79px;top:688px;width:1px;height:1px;background:#A0A0A0;"></div>
<div class="a" style="left:79px;top:690px;width:1px;height:1px;background:#A0A0A0;"></div>
<div class="a" style="left:79px;top:692px;width:1px;height:1px;background:#A0A0A0;"></div>
<div class="a" style="left:79px;top:694px;width:1px;height:1px;background:#A0A0A0;"></div>
<div class="a" style="left:79px;top:696px;width:1px;height:1px;background:#A0A0A0;"></div>
<div class="a" style="left:79px;top:698px;width:1px;height:1px;background:#A0A0A0;"></div>
<div class="a" style="left:79px;top:700px;width:1px;height:1px;background:#A0A0A0;"></div>
<div class="a" style="left:79px;top:702px;width:1px;height:1px;background:#A0A0A0;"></div>
<div class="a" style="left:79px;top:704px;width:1px;height:1px;background:#A0A0A0;"></div>
<div class="a" style="left:79px;top:706px;width:1px;height:1px;background:#A0A0A0;"></div>
<div class="a" style="left:79px;top:708px;width:1px;height:1px;background:#A0A0A0;"></div>
<div class="a" style="left:79px;top:710px;width:1px;height:1px;background:#A0A0A0;"></div>
<div class="a" style="left:79px;top:712px;width:1px;height:1px;background:#A0A0A0;"></div>
<div class="a" style="left:79px;top:714px;width:1px;height:1px;background:#A0A0A0;"></div>
<div class="a" style="left:79px;top:716px;width:1px;height:1px;background:#A0A0A0;"></div>
<div class="a" style="left:79px;top:718px;width:1px;height:1px;background:#A0A0A0;"></div>
<div class="a" style="left:79px;top:720px;width:1px;height:1px;background:#A0A0A0;"></div>
<div class="a" style="left:79px;top:722px;width:1px;height:1px;background:#A0A0A0;"></div>
<div class="a" style="left:79px;top:724px;width:1px;height:1px;background:#A0A0A0;"></div>
<div class="a" style="left:79px;top:726px;width:1px;height:1px;background:#A0A0A0;"></div>
<div class="a" style="left:79px;top:728px;width:1px;height:1px;background:#A0A0A0;"></div>
<div class="a" style="left:79px;top:730px;width:1px;height:1px;background:#A0A0A0;"></div>
<div class="a" style="left:79px;top:732px;width:1px;height:1px;background:#A0A0A0;"></div>
<div class="a" style="left:79px;top:734px;width:1px;height:1px;background:#A0A0A0;"></div>
<div class="a" style="left:79px;top:736px;width:1px;height:1px;background:#A0A0A0;"></div>
<div class="a" style="left:79px;top:738px;width:1px;height:1px;background:#A0A0A0;"></div>
<div class="a" style="left:79px;top:740px;width:1px;height:1px;background:#A0A0A0;"></div>
<div class="a" style="left:79px;top:742px;width:1px;height:1px;background:#A0A0A0;"></div>
<div class="a" style="left:79px;top:744px;width:1px;height:1px;background:#A0A0A0;"></div>
<div class="a" style="left:79px;top:746px;width:1px;height:1px;background:#A0A0A0;"></div>
<div class="a" style="left:79px;top:748px;width:1px;height:1px;background:#A0A0A0;"></div>
<div class="a" style="left:79px;top:750px;width:1px;height:1px;background:#A0A0A0;"></div>
<div class="a" style="left:79px;top:752px;width:1px;height:1px;background:#A0A0A0;"></div>
<div class="a" style="left:79px;top:754px;width:1px;height:1px;background:#A0A0A0;"></div>
<div class="a" style="left:79px;top:756px;width:1px;height:1px;background:#A0A0A0;"></div>
<div class="a" style="left:79px;top:758px;width:1px;height:1px;background:#A0A0A0;"></div>
<div class="a" style="left:79px;top:760px;width:1px;height:1px;background:#A0A0A0;"></div>
<div class="a" style="left:79px;top:762px;width:1px;height:1px;background:#A0A0A0;"></div>
<div class="a" style="left:79px;top:764px;width:1px;height:1px;background:#A0A0A0;"></div>
<div class="a" style="left:79px;top:766px;width:1px;height:1px;background:#A0A0A0;"></div>
<div class="a" style="left:79px;top:768px;width:1px;height:1px;background:#A0A0A0;"></div>
<div class="a" style="left:79px;top:770px;width:1px;height:1px;background:#A0A0A0;"></div>
<div class="a" style="left:79px;top:772px;width:1px;height:1px;background:#A0A0A0;"></div>
<div class="a" style="left:79px;top:774px;width:1px;height:1px;background:#A0A0A0;"></div>
<div class="a" style="left:79px;top:776px;width:1px;height:1px;background:#A0A0A0;"></div>
<div class="a" style="left:79px;top:778px;width:1px;height:1px;background:#A0A0A0;"></div>
<div class="a" style="left:79px;top:780px;width:1px;height:1px;background:#A0A0A0;"></div>
<div class="a" style="left:79px;top:782px;width:1px;height:1px;background:#A0A0A0;"></div>
<div class="a" style="left:79px;top:784px;width:1px;height:1px;background:#A0A0A0;"></div>
<div class="a" style="left:79px;top:786px;width:1px;height:1px;background:#A0A0A0;"></div>
<div class="a" style="left:79px;top:788px;width:1px;height:1px;background:#A0A0A0;"></div>
<div class="a" style="left:79px;top:790px;width:1px;height:1px;background:#A0A0A0;"></div>
<div class="a" style="left:79px;top:792px;width:1px;height:1px;background:#A0A0A0;"></div>
<div class="a" style="left:79px;top:794px;width:1px;height:1px;background:#A0A0A0;"></div>
<div class="a" style="left:79px;top:796px;width:1px;height:1px;background:#A0A0A0;"></div>
<div class="a" style="left:79px;top:798px;width:1px;height:1px;background:#A0A0A0;"></div>
<div class="a" style="left:79px;top:800px;width:1px;height:1px;background:#A0A0A0;"></div>
<div class="a" style="left:79px;top:802px;width:1px;height:1px;background:#A0A0A0;"></div>
<div class="a" style="left:79px;top:804px;width:1px;height:1px;background:#A0A0A0;"></div>
<div class="a" style="left:79px;top:806px;width:1px;height:1px;background:#A0A0A0;"></div>
<div class="a" style="left:79px;top:808px;width:1px;height:1px;background:#A0A0A0;"></div>
<div class="a" style="left:79px;top:810px;width:1px;height:1px;background:#A0A0A0;"></div>
<div class="a" style="left:79px;top:812px;width:1px;height:1px;background:#A0A0A0;"></div>
<div class="a" style="left:79px;top:814px;width:1px;height:1px;background:#A0A0A0;"></div>
<div class="a" style="left:79px;top:816px;width:1px;height:1px;background:#A0A0A0;"></div>
<div class="a" style="left:79px;top:818px;width:1px;height:1px;background:#A0A0A0;"></div>
<div class="a" style="left:79px;top:820px;width:1px;height:1px;background:#A0A0A0;"></div>
<div class="a" style="left:79px;top:822px;width:1px;height:1px;background:#A0A0A0;"></div>
<div class="a" style="left:79px;top:824px;width:1px;height:1px;background:#A0A0A0;"></div>
<div class="a" style="left:79px;top:826px;width:1px;height:1px;background:#A0A0A0;"></div>
<div class="a" style="left:79px;top:828px;width:1px;height:1px;background:#A0A0A0;"></div>
<div class="a" style="left:79px;top:830px;width:1px;height:1px;background:#A0A0A0;"></div>
<div class="a" style="left:79px;top:832px;width:1px;height:1px;background:#A0A0A0;"></div>
<div class="a" style="left:79px;top:834px;width:1px;height:1px;background:#A0A0A0;"></div>
<div class="a" style="left:79px;top:836px;width:1px;height:1px;background:#A0A0A0;"></div>
<div class="a" style="left:79px;top:838px;width:1px;height:1px;background:#A0A0A0;"></div>
<div class="a" style="left:79px;top:840px;width:1px;height:1px;background:#A0A0A0;"></div>
<div class="a" style="left:79px;top:842px;width:1px;height:1px;background:#A0A0A0;"></div>
<div class="a" style="left:98px;top:698px;width:1px;height:1px;background:#A0A0A0;"></div>
<div class="a" style="left:98px;top:700px;width:1px;height:1px;background:#A0A0A0;"></div>
<div class="a" style="left:98px;top:702px;width:1px;height:1px;background:#A0A0A0;"></div>
<div class="a" style="left:98px;top:704px;width:1px;height:1px;background:#A0A0A0;"></div>
<div class="a" style="left:98px;top:706px;width:1px;height:1px;background:#A0A0A0;"></div>
<svg style="left:18px;top:584px;" width="9" height="9" viewBox="0 0 9 9"><defs><linearGradient id="exg" x1="0" y1="0" x2="0" y2="1"><stop offset="0" stop-color="#fff"/><stop offset=".5" stop-color="#F4F2EA"/><stop offset="1" stop-color="#CFCBB8"/></linearGradient></defs><rect x="0.5" y="0.5" width="8" height="8" rx="1" fill="url(#exg)" stroke="#7B9AC2"/><rect x="2" y="4" width="5" height="1" fill="#000"/></svg>
<svg style="left:34px;top:580px;" width="16" height="16" viewBox="0 0 16 16"><path d="M1.5,16 V5 H4.5 V9 L8,6.5 V9 L11.5,6.5 V9 L15,6.5 V16 Z" fill="#E03030" stroke="#400000" stroke-width="1"/><path d="M2,12 H15" stroke="#8E0808" opacity=".5"/><path d="M3,3 Q5,1 7,2.5 Q9,4 11,1.5" fill="none" stroke="#400000" stroke-width="1"/></svg>
<div class="t" style="left:53px;top:583px;font-size:11px;line-height:13px;color:#000;letter-spacing:-0.2px;">Company X</div>
<div class="a" style="left:47px;top:606px;width:1px;height:1px;background:#A0A0A0;"></div>
<div class="a" style="left:49px;top:606px;width:1px;height:1px;background:#A0A0A0;"></div>
<div class="a" style="left:51px;top:606px;width:1px;height:1px;background:#A0A0A0;"></div>
<svg style="left:37px;top:601px;" width="9" height="9" viewBox="0 0 9 9"><defs><linearGradient id="exg" x1="0" y1="0" x2="0" y2="1"><stop offset="0" stop-color="#fff"/><stop offset=".5" stop-color="#F4F2EA"/><stop offset="1" stop-color="#CFCBB8"/></linearGradient></defs><rect x="0.5" y="0.5" width="8" height="8" rx="1" fill="url(#exg)" stroke="#7B9AC2"/><rect x="2" y="4" width="5" height="1" fill="#000"/></svg>
<svg style="left:52px;top:599px;" width="16" height="14" viewBox="0 0 16 14"><path d="M1,10 L6,5 H15.5 L11,11 Z" fill="#E82020" stroke="#800000" stroke-width=".8"/><path d="M1,10 H11 V12 H1Z" fill="#900"/><path d="M11,11 L15.5,5 V7 L11,13Z" fill="#B00000"/><path d="M0.5,3 H6 V0.5 L10,4 L6,7.5 V5 H0.5Z" fill="#D8D8D8" stroke="#404040" stroke-width=".9"/></svg>
<div class="t" style="left:72px;top:600px;font-size:11px;line-height:13px;color:#000;">[200-250] Procution Line</div>
<div class="a" style="left:66px;top:623px;width:1px;height:1px;background:#A0A0A0;"></div>
<div class="a" style="left:68px;top:623px;width:1px;height:1px;background:#A0A0A0;"></div>
<div class="a" style="left:70px;top:623px;width:1px;height:1px;background:#A0A0A0;"></div>
<svg style="left:56px;top:618px;" width="9" height="9" viewBox="0 0 9 9"><defs><linearGradient id="exg" x1="0" y1="0" x2="0" y2="1"><stop offset="0" stop-color="#fff"/><stop offset=".5" stop-color="#F4F2EA"/><stop offset="1" stop-color="#CFCBB8"/></linearGradient></defs><rect x="0.5" y="0.5" width="8" height="8" rx="1" fill="url(#exg)" stroke="#7B9AC2"/><rect x="2" y="4" width="5" height="1" fill="#000"/><rect x="4" y="2" width="1" height="5" fill="#000"/></svg>
<svg style="left:71px;top:616px;" width="16" height="16" viewBox="0 0 16 16"><path d="M1,6.5 L5.5,2.5 H15.5 L12,6.5 Z" fill="#C42020" stroke="#5A0000" stroke-width=".7"/><path d="M5.5,3.2 H14" stroke="#E86060" stroke-width=".8"/><path d="M1,6.5 H12 V8 H1Z" fill="#5A0000"/><path d="M12,6.5 L15.5,2.5 V4 L12,8Z" fill="#5A0000"/>
<path d="M1.6,8 V14.5 M11.2,8 V13 M14.6,4 V10" stroke="#5A0000" stroke-width="1.8"/><path d="M5,8 V11.5" stroke="#5A0000" stroke-width="1.2"/></svg>
<div class="t" style="left:91px;top:617px;font-size:11px;line-height:13px;color:#000;letter-spacing:-0.1px;">[TODAY] Exchange ot tools - TODAY</div>
<div class="a" style="left:66px;top:640px;width:1px;height:1px;background:#A0A0A0;"></div>
<div class="a" style="left:68px;top:640px;width:1px;height:1px;background:#A0A0A0;"></div>
<div class="a" style="left:70px;top:640px;width:1px;height:1px;background:#A0A0A0;"></div>
<svg style="left:56px;top:635px;" width="9" height="9" viewBox="0 0 9 9"><defs><linearGradient id="exg" x1="0" y1="0" x2="0" y2="1"><stop offset="0" stop-color="#fff"/><stop offset=".5" stop-color="#F4F2EA"/><stop offset="1" stop-color="#CFCBB8"/></linearGradient></defs><rect x="0.5" y="0.5" width="8" height="8" rx="1" fill="url(#exg)" stroke="#7B9AC2"/><rect x="2" y="4" width="5" height="1" fill="#000"/><rect x="4" y="2" width="1" height="5" fill="#000"/></svg>
<svg style="left:71px;top:633px;" width="16" height="16" viewBox="0 0 16 16"><path d="M1,6.5 L5.5,2.5 H15.5 L12,6.5 Z" fill="#C42020" stroke="#5A0000" stroke-width=".7"/><path d="M5.5,3.2 H14" stroke="#E86060" stroke-width=".8"/><path d="M1,6.5 H12 V8 H1Z" fill="#5A0000"/><path d="M12,6.5 L15.5,2.5 V4 L12,8Z" fill="#5A0000"/>
<path d="M1.6,8 V14.5 M11.2,8 V13 M14.6,4 V10" stroke="#5A0000" stroke-width="1.8"/><path d="M5,8 V11.5" stroke="#5A0000" stroke-width="1.2"/></svg>
<div class="t" style="left:91px;top:634px;font-size:11px;line-height:13px;color:#000;letter-spacing:-0.2px;">[INTERNAL] Exchange ot tools - INTERNAL</div>
<div class="a" style="left:66px;top:657px;width:1px;height:1px;background:#A0A0A0;"></div>
<div class="a" style="left:68px;top:657px;width:1px;height:1px;background:#A0A0A0;"></div>
<div class="a" style="left:70px;top:657px;width:1px;height:1px;background:#A0A0A0;"></div>
<svg style="left:56px;top:652px;" width="9" height="9" viewBox="0 0 9 9"><defs><linearGradient id="exg" x1="0" y1="0" x2="0" y2="1"><stop offset="0" stop-color="#fff"/><stop offset=".5" stop-color="#F4F2EA"/><stop offset="1" stop-color="#CFCBB8"/></linearGradient></defs><rect x="0.5" y="0.5" width="8" height="8" rx="1" fill="url(#exg)" stroke="#7B9AC2"/><rect x="2" y="4" width="5" height="1" fill="#000"/></svg>
<svg style="left:71px;top:650px;" width="16" height="16" viewBox="0 0 16 16"><path d="M1,6.5 L5.5,2.5 H15.5 L12,6.5 Z" fill="#C42020" stroke="#5A0000" stroke-width=".7"/><path d="M5.5,3.2 H14" stroke="#E86060" stroke-width=".8"/><path d="M1,6.5 H12 V8 H1Z" fill="#5A0000"/><path d="M12,6.5 L15.5,2.5 V4 L12,8Z" fill="#5A0000"/>
<path d="M1.6,8 V14.5 M11.2,8 V13 M14.6,4 V10" stroke="#5A0000" stroke-width="1.8"/><path d="M5,8 V11.5" stroke="#5A0000" stroke-width="1.2"/></svg>
<svg style="left:80px;top:656px;" width="8" height="8" viewBox="0 0 8 8"><path d="M4,0.5 L7.5,7.5 H0.5Z" fill="#E03030" stroke="#900" stroke-width=".6"/><rect x="3.5" y="2.5" width="1" height="3" fill="#fff"/></svg>
<div class="t" style="left:91px;top:651px;font-size:11px;line-height:13px;color:#000;letter-spacing:-0.36px;">[EXTERNAL] Exchange ot tools - EXTERNAL</div>
<div class="a" style="left:79px;top:674px;width:1px;height:1px;background:#A0A0A0;"></div>
<div class="a" style="left:81px;top:674px;width:1px;height:1px;background:#A0A0A0;"></div>
<div class="a" style="left:83px;top:674px;width:1px;height:1px;background:#A0A0A0;"></div>
<div class="a" style="left:85px;top:674px;width:1px;height:1px;background:#A0A0A0;"></div>
<div class="a" style="left:87px;top:674px;width:1px;height:1px;background:#A0A0A0;"></div>
<div class="a" style="left:89px;top:674px;width:1px;height:1px;background:#A0A0A0;"></div>
<svg style="left:93px;top:666px;" width="12" height="15" viewBox="0 0 12 15"><path d="M0.5,0.5 H7.5 L11.5,4.5 V14.5 H0.5Z" fill="#C6EAC2" stroke="#3AAA42"/><path d="M7.5,0.5 V4.5 H11.5Z" fill="#8ED48E"/><rect x="1" y="1" width="6" height="3" fill="#E0F4DC"/>
<g stroke="#173F17" stroke-width="1.9" stroke-linecap="round"><path d="M3.6,5.6 L8.4,10.4 M8.4,5.6 L3.6,10.4 M2.3,8 H9.7"/></g><circle cx="6" cy="8" r="1.1" fill="#C6EAC2"/></svg>
<div class="t" style="left:110px;top:668px;font-size:11px;line-height:13px;color:#000;">Frigör undre vertygshalva</div>
<div class="a" style="left:85px;top:691px;width:1px;height:1px;background:#A0A0A0;"></div>
<div class="a" style="left:87px;top:691px;width:1px;height:1px;background:#A0A0A0;"></div>
<div class="a" style="left:89px;top:691px;width:1px;height:1px;background:#A0A0A0;"></div>
<svg style="left:75px;top:686px;" width="9" height="9" viewBox="0 0 9 9"><defs><linearGradient id="exg" x1="0" y1="0" x2="0" y2="1"><stop offset="0" stop-color="#fff"/><stop offset=".5" stop-color="#F4F2EA"/><stop offset="1" stop-color="#CFCBB8"/></linearGradient></defs><rect x="0.5" y="0.5" width="8" height="8" rx="1" fill="url(#exg)" stroke="#7B9AC2"/><rect x="2" y="4" width="5" height="1" fill="#000"/></svg>
<svg style="left:93px;top:683px;" width="12" height="15" viewBox="0 0 12 15"><path d="M0.5,0.5 H7.5 L11.5,4.5 V14.5 H0.5Z" fill="#C6EAC2" stroke="#3AAA42"/><path d="M7.5,0.5 V4.5 H11.5Z" fill="#8ED48E"/><rect x="1" y="1" width="6" height="3" fill="#E0F4DC"/>
<g stroke="#173F17" stroke-width="1.9" stroke-linecap="round"><path d="M3.6,5.6 L8.4,10.4 M8.4,5.6 L3.6,10.4 M2.3,8 H9.7"/></g><circle cx="6" cy="8" r="1.1" fill="#C6EAC2"/></svg>
<div class="t" style="left:110px;top:685px;font-size:11px;line-height:13px;color:#000;">Lossa stödplåt</div>
<div class="a" style="left:98px;top:708px;width:1px;height:1px;background:#A0A0A0;"></div>
<div class="a" style="left:100px;top:708px;width:1px;height:1px;background:#A0A0A0;"></div>
<div class="a" style="left:102px;top:708px;width:1px;height:1px;background:#A0A0A0;"></div>
<div class="a" style="left:104px;top:708px;width:1px;height:1px;background:#A0A0A0;"></div>
<div class="a" style="left:106px;top:708px;width:1px;height:1px;background:#A0A0A0;"></div>
<div class="a" style="left:108px;top:708px;width:1px;height:1px;background:#A0A0A0;"></div>
<div class="a" style="left:129px;top:699px;width:107px;height:17px;background:#ECE9D8;"></div>
<svg style="left:108px;top:699px;" width="16" height="16" viewBox="0 0 16 16"><g transform="scale(1.0)"><defs><radialGradient id="pb16" cx=".45" cy=".35" r=".7"><stop offset="0" stop-color="#FFFDF0"/><stop offset=".45" stop-color="#B8A870"/><stop offset="1" stop-color="#6E6230"/></radialGradient></defs>
<path d="M5.2,12 L5.6,15 M10.8,12 L10.4,15" stroke="#C8C8C8" stroke-width=".8"/>
<rect x="6" y="11.5" width="1.8" height="3.5" fill="#3858A8"/><rect x="8.3" y="11.5" width="1.8" height="3.5" fill="#3858A8"/>
<rect x="5.5" y="14.6" width="2.4" height="1.2" fill="#202020"/><rect x="8.2" y="14.6" width="2.4" height="1.2" fill="#202020"/>
<ellipse cx="8" cy="9" rx="5" ry="3.6" fill="url(#pb16)"/>
<circle cx="2.8" cy="10.6" r="1.2" fill="#F07A20"/><circle cx="13.2" cy="10.6" r="1.2" fill="#F07A20"/>
<ellipse cx="8" cy="4.2" rx="2.1" ry="2.4" fill="#F07A20"/>
<path d="M5.8,3.6 Q5.8,0.6 8,0.6 Q10.2,0.6 10.2,3.6 Q8,2.6 5.8,3.6Z" fill="#7C7040"/></g></svg>
<div class="t" style="left:129px;top:702px;font-size:11px;line-height:13px;color:#000;">Lägg bort stödplåten</div>
<div class="a" style="left:79px;top:725px;width:1px;height:1px;background:#A0A0A0;"></div>
<div class="a" style="left:81px;top:725px;width:1px;height:1px;background:#A0A0A0;"></div>
<div class="a" style="left:83px;top:725px;width:1px;height:1px;background:#A0A0A0;"></div>
<div class="a" style="left:85px;top:725px;width:1px;height:1px;background:#A0A0A0;"></div>
<div class="a" style="left:87px;top:725px;width:1px;height:1px;background:#A0A0A0;"></div>
<div class="a" style="left:89px;top:725px;width:1px;height:1px;background:#A0A0A0;"></div>
<svg style="left:93px;top:717px;" width="12" height="15" viewBox="0 0 12 15"><path d="M0.5,0.5 H7.5 L11.5,4.5 V14.5 H0.5Z" fill="#C6EAC2" stroke="#3AAA42"/><path d="M7.5,0.5 V4.5 H11.5Z" fill="#8ED48E"/><rect x="1" y="1" width="6" height="3" fill="#E0F4DC"/>
<g stroke="#173F17" stroke-width="1.9" stroke-linecap="round"><path d="M3.6,5.6 L8.4,10.4 M8.4,5.6 L3.6,10.4 M2.3,8 H9.7"/></g><circle cx="6" cy="8" r="1.1" fill="#C6EAC2"/></svg>
<div class="t" style="left:110px;top:719px;font-size:11px;line-height:13px;color:#000;">Lyft bort verktyget</div>
<div class="a" style="left:85px;top:742px;width:1px;height:1px;background:#A0A0A0;"></div>
<div class="a" style="left:87px;top:742px;width:1px;height:1px;background:#A0A0A0;"></div>
<div class="a" style="left:89px;top:742px;width:1px;height:1px;background:#A0A0A0;"></div>
<svg style="left:75px;top:737px;" width="9" height="9" viewBox="0 0 9 9"><defs><linearGradient id="exg" x1="0" y1="0" x2="0" y2="1"><stop offset="0" stop-color="#fff"/><stop offset=".5" stop-color="#F4F2EA"/><stop offset="1" stop-color="#CFCBB8"/></linearGradient></defs><rect x="0.5" y="0.5" width="8" height="8" rx="1" fill="url(#exg)" stroke="#7B9AC2"/><rect x="2" y="4" width="5" height="1" fill="#000"/><rect x="4" y="2" width="1" height="5" fill="#000"/></svg>
<svg style="left:93px;top:734px;" width="12" height="15" viewBox="0 0 12 15"><path d="M0.5,0.5 H7.5 L11.5,4.5 V14.5 H0.5Z" fill="#C6EAC2" stroke="#3AAA42"/><path d="M7.5,0.5 V4.5 H11.5Z" fill="#8ED48E"/><rect x="1" y="1" width="6" height="3" fill="#E0F4DC"/>
<g stroke="#173F17" stroke-width="1.9" stroke-linecap="round"><path d="M3.6,5.6 L8.4,10.4 M8.4,5.6 L3.6,10.4 M2.3,8 H9.7"/></g><circle cx="6" cy="8" r="1.1" fill="#C6EAC2"/></svg>
<div class="t" style="left:110px;top:736px;font-size:11px;line-height:13px;color:#000;">Lyft bort insatsen ur bottenplattan</div>
<div class="a" style="left:85px;top:759px;width:1px;height:1px;background:#A0A0A0;"></div>
<div class="a" style="left:87px;top:759px;width:1px;height:1px;background:#A0A0A0;"></div>
<div class="a" style="left:89px;top:759px;width:1px;height:1px;background:#A0A0A0;"></div>
<svg style="left:75px;top:754px;" width="9" height="9" viewBox="0 0 9 9"><defs><linearGradient id="exg" x1="0" y1="0" x2="0" y2="1"><stop offset="0" stop-color="#fff"/><stop offset=".5" stop-color="#F4F2EA"/><stop offset="1" stop-color="#CFCBB8"/></linearGradient></defs><rect x="0.5" y="0.5" width="8" height="8" rx="1" fill="url(#exg)" stroke="#7B9AC2"/><rect x="2" y="4" width="5" height="1" fill="#000"/><rect x="4" y="2" width="1" height="5" fill="#000"/></svg>
<svg style="left:93px;top:751px;" width="12" height="15" viewBox="0 0 12 15"><path d="M0.5,0.5 H7.5 L11.5,4.5 V14.5 H0.5Z" fill="#C6EAC2" stroke="#3AAA42"/><path d="M7.5,0.5 V4.5 H11.5Z" fill="#8ED48E"/><rect x="1" y="1" width="6" height="3" fill="#E0F4DC"/>
<g stroke="#173F17" stroke-width="1.9" stroke-linecap="round"><path d="M3.6,5.6 L8.4,10.4 M8.4,5.6 L3.6,10.4 M2.3,8 H9.7"/></g><circle cx="6" cy="8" r="1.1" fill="#C6EAC2"/></svg>
<div class="t" style="left:110px;top:753px;font-size:11px;line-height:13px;color:#000;">Lyft i "nya" insatsen i bottenplattan</div>
<div class="a" style="left:85px;top:776px;width:1px;height:1px;background:#A0A0A0;"></div>
<div class="a" style="left:87px;top:776px;width:1px;height:1px;background:#A0A0A0;"></div>
<div class="a" style="left:89px;top:776px;width:1px;height:1px;background:#A0A0A0;"></div>
<svg style="left:75px;top:771px;" width="9" height="9" viewBox="0 0 9 9"><defs><linearGradient id="exg" x1="0" y1="0" x2="0" y2="1"><stop offset="0" stop-color="#fff"/><stop offset=".5" stop-color="#F4F2EA"/><stop offset="1" stop-color="#CFCBB8"/></linearGradient></defs><rect x="0.5" y="0.5" width="8" height="8" rx="1" fill="url(#exg)" stroke="#7B9AC2"/><rect x="2" y="4" width="5" height="1" fill="#000"/><rect x="4" y="2" width="1" height="5" fill="#000"/></svg>
<svg style="left:93px;top:768px;" width="12" height="15" viewBox="0 0 12 15"><path d="M0.5,0.5 H7.5 L11.5,4.5 V14.5 H0.5Z" fill="#C6EAC2" stroke="#3AAA42"/><path d="M7.5,0.5 V4.5 H11.5Z" fill="#8ED48E"/><rect x="1" y="1" width="6" height="3" fill="#E0F4DC"/>
<g stroke="#173F17" stroke-width="1.9" stroke-linecap="round"><path d="M3.6,5.6 L8.4,10.4 M8.4,5.6 L3.6,10.4 M2.3,8 H9.7"/></g><circle cx="6" cy="8" r="1.1" fill="#C6EAC2"/></svg>
<div class="t" style="left:110px;top:770px;font-size:11px;line-height:13px;color:#000;">Lyft fram "nya" verktyget till ställ</div>
<div class="a" style="left:79px;top:793px;width:1px;height:1px;background:#A0A0A0;"></div>
<div class="a" style="left:81px;top:793px;width:1px;height:1px;background:#A0A0A0;"></div>
<div class="a" style="left:83px;top:793px;width:1px;height:1px;background:#A0A0A0;"></div>
<div class="a" style="left:85px;top:793px;width:1px;height:1px;background:#A0A0A0;"></div>
<div class="a" style="left:87px;top:793px;width:1px;height:1px;background:#A0A0A0;"></div>
<div class="a" style="left:89px;top:793px;width:1px;height:1px;background:#A0A0A0;"></div>
<svg style="left:93px;top:785px;" width="12" height="15" viewBox="0 0 12 15"><path d="M0.5,0.5 H7.5 L11.5,4.5 V14.5 H0.5Z" fill="#C6EAC2" stroke="#3AAA42"/><path d="M7.5,0.5 V4.5 H11.5Z" fill="#8ED48E"/><rect x="1" y="1" width="6" height="3" fill="#E0F4DC"/>
<g stroke="#173F17" stroke-width="1.9" stroke-linecap="round"><path d="M3.6,5.6 L8.4,10.4 M8.4,5.6 L3.6,10.4 M2.3,8 H9.7"/></g><circle cx="6" cy="8" r="1.1" fill="#C6EAC2"/></svg>
<div class="t" style="left:110px;top:787px;font-size:11px;line-height:13px;color:#000;">Montera undre verktygshalva</div>
<div class="a" style="left:85px;top:810px;width:1px;height:1px;background:#A0A0A0;"></div>
<div class="a" style="left:87px;top:810px;width:1px;height:1px;background:#A0A0A0;"></div>
<div class="a" style="left:89px;top:810px;width:1px;height:1px;background:#A0A0A0;"></div>
<svg style="left:75px;top:805px;" width="9" height="9" viewBox="0 0 9 9"><defs><linearGradient id="exg" x1="0" y1="0" x2="0" y2="1"><stop offset="0" stop-color="#fff"/><stop offset=".5" stop-color="#F4F2EA"/><stop offset="1" stop-color="#CFCBB8"/></linearGradient></defs><rect x="0.5" y="0.5" width="8" height="8" rx="1" fill="url(#exg)" stroke="#7B9AC2"/><rect x="2" y="4" width="5" height="1" fill="#000"/><rect x="4" y="2" width="1" height="5" fill="#000"/></svg>
<svg style="left:93px;top:802px;" width="12" height="15" viewBox="0 0 12 15"><path d="M0.5,0.5 H7.5 L11.5,4.5 V14.5 H0.5Z" fill="#C6EAC2" stroke="#3AAA42"/><path d="M7.5,0.5 V4.5 H11.5Z" fill="#8ED48E"/><rect x="1" y="1" width="6" height="3" fill="#E0F4DC"/>
<g stroke="#173F17" stroke-width="1.9" stroke-linecap="round"><path d="M3.6,5.6 L8.4,10.4 M8.4,5.6 L3.6,10.4 M2.3,8 H9.7"/></g><circle cx="6" cy="8" r="1.1" fill="#C6EAC2"/></svg>
<div class="t" style="left:110px;top:804px;font-size:11px;line-height:13px;color:#000;">Montera stödplåt</div>
<div class="a" style="left:85px;top:827px;width:1px;height:1px;background:#A0A0A0;"></div>
<div class="a" style="left:87px;top:827px;width:1px;height:1px;background:#A0A0A0;"></div>
<div class="a" style="left:89px;top:827px;width:1px;height:1px;background:#A0A0A0;"></div>
<svg style="left:75px;top:822px;" width="9" height="9" viewBox="0 0 9 9"><defs><linearGradient id="exg" x1="0" y1="0" x2="0" y2="1"><stop offset="0" stop-color="#fff"/><stop offset=".5" stop-color="#F4F2EA"/><stop offset="1" stop-color="#CFCBB8"/></linearGradient></defs><rect x="0.5" y="0.5" width="8" height="8" rx="1" fill="url(#exg)" stroke="#7B9AC2"/><rect x="2" y="4" width="5" height="1" fill="#000"/><rect x="4" y="2" width="1" height="5" fill="#000"/></svg>
<svg style="left:93px;top:819px;" width="12" height="15" viewBox="0 0 12 15"><path d="M0.5,0.5 H7.5 L11.5,4.5 V14.5 H0.5Z" fill="#C6EAC2" stroke="#3AAA42"/><path d="M7.5,0.5 V4.5 H11.5Z" fill="#8ED48E"/><rect x="1" y="1" width="6" height="3" fill="#E0F4DC"/>
<g stroke="#173F17" stroke-width="1.9" stroke-linecap="round"><path d="M3.6,5.6 L8.4,10.4 M8.4,5.6 L3.6,10.4 M2.3,8 H9.7"/></g><circle cx="6" cy="8" r="1.1" fill="#C6EAC2"/></svg>
<div class="t" style="left:110px;top:821px;font-size:11px;line-height:13px;color:#000;">Byte av styrning i verktygskassetten, framsida</div>
<div class="a" style="left:85px;top:844px;width:1px;height:1px;background:#A0A0A0;"></div>
<div class="a" style="left:87px;top:844px;width:1px;height:1px;background:#A0A0A0;"></div>
<div class="a" style="left:89px;top:844px;width:1px;height:1px;background:#A0A0A0;"></div>
<svg style="left:75px;top:839px;" width="9" height="9" viewBox="0 0 9 9"><defs><linearGradient id="exg" x1="0" y1="0" x2="0" y2="1"><stop offset="0" stop-color="#fff"/><stop offset=".5" stop-color="#F4F2EA"/><stop offset="1" stop-color="#CFCBB8"/></linearGradient></defs><rect x="0.5" y="0.5" width="8" height="8" rx="1" fill="url(#exg)" stroke="#7B9AC2"/><rect x="2" y="4" width="5" height="1" fill="#000"/><rect x="4" y="2" width="1" height="5" fill="#000"/></svg>
<svg style="left:93px;top:836px;" width="12" height="15" viewBox="0 0 12 15"><path d="M0.5,0.5 H7.5 L11.5,4.5 V14.5 H0.5Z" fill="#C6EAC2" stroke="#3AAA42"/><path d="M7.5,0.5 V4.5 H11.5Z" fill="#8ED48E"/><rect x="1" y="1" width="6" height="3" fill="#E0F4DC"/>
<g stroke="#173F17" stroke-width="1.9" stroke-linecap="round"><path d="M3.6,5.6 L8.4,10.4 M8.4,5.6 L3.6,10.4 M2.3,8 H9.7"/></g><circle cx="6" cy="8" r="1.1" fill="#C6EAC2"/></svg>
<div class="t" style="left:110px;top:838px;font-size:11px;line-height:13px;color:#000;">Byte av styrning i verktygskassetten, baksida</div>
<svg style="left:257px;top:558px;" width="14" height="16" viewBox="0 0 14 16"><g transform="scale(.9)"><path d="M1.5,16 V5 H4.5 V9 L8,6.5 V9 L11.5,6.5 V9 L15,6.5 V16 Z" fill="#C8C4B4" stroke="#9E9A8A" stroke-width="1"/><path d="M2,12 H15" stroke="#B0AC9C" opacity=".5"/><path d="M3,3 Q5,1 7,2.5 Q9,4 11,1.5" fill="none" stroke="#9E9A8A" stroke-width="1"/></g></svg>
<svg style="left:278px;top:558px;" width="16" height="16" viewBox="0 0 16 16"><path d="M1,9 L8,2 H14 V8 L7,15 Z" fill="#B4B0A0" stroke="#A09C8C"/></svg>
<svg style="left:300px;top:558px;" width="16" height="16" viewBox="0 0 16 16"><path d="M1,12 L5,7 H15 L11,13 Z" fill="#B4B0A0"/><path d="M1,12 H11 V14 H1Z" fill="#A09C8C"/><path d="M1,4 H7 V1.5 L11,5 L7,8.5 V6 H1Z" fill="#F0EEE6" stroke="#A09C8C" stroke-width=".9"/></svg>
<svg style="left:322px;top:558px;" width="16" height="16" viewBox="0 0 16 16"><path d="M1,6.5 L5.5,2.5 H15.5 L12,6.5 Z" fill="#B6B2A2" stroke="#9E9A8A" stroke-width=".7"/><path d="M5.5,3.2 H14" stroke="#C8C4B4" stroke-width=".8"/><path d="M1,6.5 H12 V8 H1Z" fill="#9E9A8A"/><path d="M12,6.5 L15.5,2.5 V4 L12,8Z" fill="#9E9A8A"/>
<path d="M1.6,8 V14.5 M11.2,8 V13 M14.6,4 V10" stroke="#9E9A8A" stroke-width="1.8"/><path d="M5,8 V11.5" stroke="#9E9A8A" stroke-width="1.2"/></svg>
<svg style="left:349px;top:559px;" width="12" height="15" viewBox="0 0 12 15"><path d="M0.5,0.5 H7.5 L11.5,4.5 V14.5 H0.5Z" fill="#C6EAC2" stroke="#3AAA42"/><path d="M7.5,0.5 V4.5 H11.5Z" fill="#8ED48E"/><rect x="1" y="1" width="6" height="3" fill="#E0F4DC"/>
<g stroke="#173F17" stroke-width="1.9" stroke-linecap="round"><path d="M3.6,5.6 L8.4,10.4 M8.4,5.6 L3.6,10.4 M2.3,8 H9.7"/></g><circle cx="6" cy="8" r="1.1" fill="#C6EAC2"/></svg>
<div class="a" style="left:371px;top:557px;width:1px;height:18px;background:#C9C5B4;"></div>
<div class="a" style="left:372px;top:557px;width:1px;height:18px;background:#fff;"></div>
<svg style="left:379px;top:558px;" width="16" height="16" viewBox="0 0 16 16"><g transform="scale(1.0)"><defs><radialGradient id="pb16" cx=".45" cy=".35" r=".7"><stop offset="0" stop-color="#FFFDF0"/><stop offset=".45" stop-color="#B8A870"/><stop offset="1" stop-color="#6E6230"/></radialGradient></defs>
<path d="M5.2,12 L5.6,15 M10.8,12 L10.4,15" stroke="#C8C8C8" stroke-width=".8"/>
<rect x="6" y="11.5" width="1.8" height="3.5" fill="#3858A8"/><rect x="8.3" y="11.5" width="1.8" height="3.5" fill="#3858A8"/>
<rect x="5.5" y="14.6" width="2.4" height="1.2" fill="#202020"/><rect x="8.2" y="14.6" width="2.4" height="1.2" fill="#202020"/>
<ellipse cx="8" cy="9" rx="5" ry="3.6" fill="url(#pb16)"/>
<circle cx="2.8" cy="10.6" r="1.2" fill="#F07A20"/><circle cx="13.2" cy="10.6" r="1.2" fill="#F07A20"/>
<ellipse cx="8" cy="4.2" rx="2.1" ry="2.4" fill="#F07A20"/>
<path d="M5.8,3.6 Q5.8,0.6 8,0.6 Q10.2,0.6 10.2,3.6 Q8,2.6 5.8,3.6Z" fill="#7C7040"/></g><path d="M12,9 V16 M8.5,12.5 H15.5" stroke="#D8A820" stroke-width="2.4"/><path d="M12,10 V15 M9.5,12.5 H14.5" stroke="#fff" stroke-width=".9"/></svg>
<svg style="left:401px;top:558px;" width="16" height="16" viewBox="0 0 16 16"><g transform="translate(-1,3) scale(.8)"><g transform="scale(1.0)"><defs><radialGradient id="pb16b" cx=".45" cy=".35" r=".7"><stop offset="0" stop-color="#FFFDF0"/><stop offset=".45" stop-color="#B8A870"/><stop offset="1" stop-color="#6E6230"/></radialGradient></defs>
<path d="M5.2,12 L5.6,15 M10.8,12 L10.4,15" stroke="#C8C8C8" stroke-width=".8"/>
<rect x="6" y="11.5" width="1.8" height="3.5" fill="#3858A8"/><rect x="8.3" y="11.5" width="1.8" height="3.5" fill="#3858A8"/>
<rect x="5.5" y="14.6" width="2.4" height="1.2" fill="#202020"/><rect x="8.2" y="14.6" width="2.4" height="1.2" fill="#202020"/>
<ellipse cx="8" cy="9" rx="5" ry="3.6" fill="url(#pb16b)"/>
<circle cx="2.8" cy="10.6" r="1.2" fill="#F07A20"/><circle cx="13.2" cy="10.6" r="1.2" fill="#F07A20"/>
<ellipse cx="8" cy="4.2" rx="2.1" ry="2.4" fill="#F07A20"/>
<path d="M5.8,3.6 Q5.8,0.6 8,0.6 Q10.2,0.6 10.2,3.6 Q8,2.6 5.8,3.6Z" fill="#7C7040"/></g></g><ellipse cx="10.5" cy="3.5" rx="5" ry="3.2" fill="#fff" stroke="#8A8A8A" stroke-width=".8"/><path d="M12,9 V16 M8.5,12.5 H15.5" stroke="#D8A820" stroke-width="2.4"/><path d="M12,10 V15 M9.5,12.5 H14.5" stroke="#fff" stroke-width=".9"/></svg>
<svg style="left:11px;top:558px;" width="16" height="16" viewBox="0 0 16 16"><g transform="scale(1.0)"><defs><radialGradient id="pb16c" cx=".45" cy=".35" r=".7"><stop offset="0" stop-color="#FFFDF0"/><stop offset=".45" stop-color="#B8A870"/><stop offset="1" stop-color="#6E6230"/></radialGradient></defs>
<path d="M5.2,12 L5.6,15 M10.8,12 L10.4,15" stroke="#C8C8C8" stroke-width=".8"/>
<rect x="6" y="11.5" width="1.8" height="3.5" fill="#3858A8"/><rect x="8.3" y="11.5" width="1.8" height="3.5" fill="#3858A8"/>
<rect x="5.5" y="14.6" width="2.4" height="1.2" fill="#202020"/><rect x="8.2" y="14.6" width="2.4" height="1.2" fill="#202020"/>
<ellipse cx="8" cy="9" rx="5" ry="3.6" fill="url(#pb16c)"/>
<circle cx="2.8" cy="10.6" r="1.2" fill="#F07A20"/><circle cx="13.2" cy="10.6" r="1.2" fill="#F07A20"/>
<ellipse cx="8" cy="4.2" rx="2.1" ry="2.4" fill="#F07A20"/>
<path d="M5.8,3.6 Q5.8,0.6 8,0.6 Q10.2,0.6 10.2,3.6 Q8,2.6 5.8,3.6Z" fill="#7C7040"/></g></svg>
<div class="a" style="left:467px;top:109px;width:1210px;height:60px;background:linear-gradient(#FFFFFF,#E6EDFA);"></div>
<div class="a" style="left:467px;top:169px;width:1210px;height:1px;background:#F4F7FC;"></div>
<div class="a" style="left:467px;top:170px;width:1210px;height:1px;background:#A9C3EE;"></div>
<svg style="left:479px;top:114px;" width="36" height="47" viewBox="0 0 36 47"><defs><radialGradient id="bpb" cx=".45" cy=".3" r=".75"><stop offset="0" stop-color="#FFFFF4"/><stop offset=".45" stop-color="#C4B884"/><stop offset="1" stop-color="#7A6A30"/></radialGradient>
<linearGradient id="bpf" x1="0" y1="0" x2="0" y2="1"><stop offset="0" stop-color="#FFE8C8"/><stop offset=".5" stop-color="#FFA050"/><stop offset="1" stop-color="#F06A00"/></linearGradient>
<linearGradient id="bpa" x1="0" y1="0" x2="0" y2="1"><stop offset="0" stop-color="#9A8E58"/><stop offset="1" stop-color="#7A6C38"/></linearGradient>
<linearGradient id="bpl" x1="0" y1="0" x2="1" y2="0"><stop offset="0" stop-color="#2A4A90"/><stop offset=".5" stop-color="#7A98D0"/><stop offset="1" stop-color="#2A4A90"/></linearGradient></defs>
<path d="M9,31 L8.5,45 H16 L17,32 Z M19,32 L20,45 H28 L26,31 Z" fill="url(#bpl)"/>
<path d="M7.5,44 Q11,41.5 16.5,45 V46 H7.5Z M19.5,45 Q24,41.5 28.5,44 V46 H19.5Z" fill="#000"/>
<path d="M18,15.5 L3,25 L4.5,29.5 L11,27.5 Q11,33.5 18,33.5 Q25,33.5 25,27.5 L31.5,29.5 L33,25 Z" fill="url(#bpa)"/>
<ellipse cx="18" cy="24.5" rx="8.2" ry="8.8" fill="url(#bpb)"/>
<circle cx="3.5" cy="28" r="2.4" fill="#F58A30"/><circle cx="32.5" cy="28.5" r="2.4" fill="#F58A30"/>
<ellipse cx="18" cy="10" rx="5.2" ry="6" fill="url(#bpf)"/>
<path d="M12.8,8.5 Q12.5,0.8 18,0.8 Q23.5,0.8 23.2,8.5 Q22,5.8 18,6 Q14,5.8 12.8,8.5Z" fill="#8A8650"/></svg>
<div class="t" style="left:525px;top:114px;font-size:18px;line-height:22px;color:#2260C8;letter-spacing:.35px;">Physical Situation</div>
<svg style="left:469px;top:87px;" width="13" height="16" viewBox="0 0 13 16"><g transform="translate(-1.5,0) scale(1)"><g transform="scale(1.0)"><defs><radialGradient id="pbt" cx=".45" cy=".35" r=".7"><stop offset="0" stop-color="#FFFDF0"/><stop offset=".45" stop-color="#B8A870"/><stop offset="1" stop-color="#6E6230"/></radialGradient></defs>
<path d="M5.2,12 L5.6,15 M10.8,12 L10.4,15" stroke="#C8C8C8" stroke-width=".8"/>
<rect x="6" y="11.5" width="1.8" height="3.5" fill="#3858A8"/><rect x="8.3" y="11.5" width="1.8" height="3.5" fill="#3858A8"/>
<rect x="5.5" y="14.6" width="2.4" height="1.2" fill="#202020"/><rect x="8.2" y="14.6" width="2.4" height="1.2" fill="#202020"/>
<ellipse cx="8" cy="9" rx="5" ry="3.6" fill="url(#pbt)"/>
<circle cx="2.8" cy="10.6" r="1.2" fill="#F07A20"/><circle cx="13.2" cy="10.6" r="1.2" fill="#F07A20"/>
<ellipse cx="8" cy="4.2" rx="2.1" ry="2.4" fill="#F07A20"/>
<path d="M5.8,3.6 Q5.8,0.6 8,0.6 Q10.2,0.6 10.2,3.6 Q8,2.6 5.8,3.6Z" fill="#7C7040"/></g></g></svg>
<svg style="left:634px;top:88px;" width="12" height="15" viewBox="0 0 12 15"><path d="M0.5,0.5 H7.5 L11.5,4.5 V14.5 H0.5Z" fill="#C6EAC2" stroke="#3AAA42"/><path d="M7.5,0.5 V4.5 H11.5Z" fill="#8ED48E"/><rect x="1" y="1" width="6" height="3" fill="#E0F4DC"/>
<g stroke="#173F17" stroke-width="1.9" stroke-linecap="round"><path d="M3.6,5.6 L8.4,10.4 M8.4,5.6 L3.6,10.4 M2.3,8 H9.7"/></g><circle cx="6" cy="8" r="1.1" fill="#C6EAC2"/></svg>
<div class="t" style="left:471px;top:183px;font-size:11px;line-height:13px;color:#2E5FA8;">Name:</div>
<div class="a" style="left:550px;top:176px;width:610px;height:19px;background:#fff;border:1px solid #7F9DB9;"></div>
<div class="t" style="left:555px;top:180px;font-size:11px;line-height:13px;color:#000;">Lägg bort stödplåten</div>
<div class="t" style="left:471px;top:201px;font-size:11px;line-height:13px;color:#2E5FA8;">Frequency:</div>
<div class="a" style="left:550px;top:200px;width:103px;height:42px;background:#fff;border:1px solid #7F9DB9;"></div>
<div class="t" style="left:578px;top:208px;font-size:11px;line-height:13px;color:#000;">0.0</div>
<div class="a" style="left:562px;top:220px;width:51px;height:1px;background:#000;"></div>
<div class="t" style="left:578px;top:223px;font-size:11px;line-height:13px;color:#000;font-style:italic;">day</div>
<div class="t" style="left:619px;top:215px;font-size:11px;line-height:13px;color:#000;font-style:italic;">times</div>
<svg style="left:475px;top:249px;" width="6" height="9" viewBox="0 0 6 9"><path d="M0.5,0.5 L5,4.5 L0.5,8.5Z" fill="#2A5CAA"/></svg>
<div class="t" style="left:486px;top:248px;font-size:11px;line-height:13px;color:#000;font-weight:700;letter-spacing:.25px;">Film sequence</div>
<svg style="left:1145px;top:248px;" width="15" height="15" viewBox="0 0 15 15"><circle cx="7" cy="7" r="6.3" fill="#fff" stroke="#1A5AA8" stroke-width="1.3"/><text x="7" y="11" font-family="Liberation Sans" font-size="10" font-weight="bold" text-anchor="middle" fill="#1A5AA8">?</text></svg>
<div class="a" style="left:472px;top:266px;width:688px;height:2px;background:linear-gradient(90deg,#5A8AD8 0%,#8EB0E8 60%,#FFFFFF 100%);"></div>
<div class="a" style="left:472px;top:273px;width:688px;height:1px;background:linear-gradient(90deg,#A4BEEA,#A4BEEA 97%,#D8E4F6);"></div>
<div class="a" style="left:472px;top:273px;width:1px;height:22px;background:linear-gradient(#A4BEEA,#fff);"></div>
<div class="a" style="left:1159px;top:273px;width:1px;height:22px;background:linear-gradient(#A4BEEA,#fff);"></div>
<div class="a" style="left:473px;top:274px;width:686px;height:21px;background:linear-gradient(#E4ECFA,#FFFFFF);"></div>
<svg style="left:478px;top:280px;" width="9" height="6" viewBox="0 0 9 6"><path d="M0.5,0.5 H8.5 L4.5,5Z" fill="#2A5CAA"/></svg>
<div class="t" style="left:492px;top:277px;font-size:11px;line-height:13px;color:#2A5CAA;font-weight:700;letter-spacing:.2px;">Notes</div>
<svg style="left:1036px;top:280px;" width="16" height="15" viewBox="0 0 16 15"><rect x="0.5" y="3.5" width="12" height="11" fill="#E8F4FF" stroke="#8A7A50"/><rect x="0.5" y="3" width="9" height="2" fill="#2060C0"/><path d="M12,1 V8 M9,4 H15" stroke="#C09020" stroke-width="2"/><path d="M12,2 V7 M10,4 H14" stroke="#FFF0A0" stroke-width=".8"/><path d="M11.5,9 Q11,13 8,14" stroke="#F0C020" fill="none"/></svg>
<svg style="left:1061px;top:280px;" width="14" height="14" viewBox="0 0 14 14"><path d="M2,2 L12,12 M12,2 L2,12" stroke="#D01818" stroke-width="3.2" stroke-linecap="round"/><path d="M2.5,2.5 L11.5,11.5" stroke="#F86060" stroke-width="1"/></svg>
<svg style="left:1084px;top:280px;" width="15" height="14" viewBox="0 0 15 14"><path d="M1,7 L7,1.5 V4.5 H14 V9.5 H7 V12.5 Z" fill="#F0EEE6" stroke="#C8C4B4"/></svg>
<svg style="left:1108px;top:280px;" width="15" height="14" viewBox="0 0 15 14"><path d="M14,7 L8,1.5 V4.5 H1 V9.5 H8 V12.5 Z" fill="#F0EEE6" stroke="#C8C4B4"/></svg>
<div class="t" style="left:1132px;top:281px;font-size:11px;line-height:13px;color:#A7A49A;">1/1</div>
<div class="a" style="left:478px;top:304px;width:676px;height:19px;background:#fff;border:1px solid #7F9DB9;"></div>
<div class="t" style="left:483px;top:308px;font-size:11px;line-height:13px;color:#000;letter-spacing:-.1px;">Serious problems when putting away the item</div>
<div class="t" style="left:484px;top:335px;font-family:'Liberation Serif';font-size:15px;line-height:17px;font-weight:bold;font-style:italic">B</div>
<div class="t" style="left:509px;top:335px;font-family:'Liberation Serif';font-size:15px;line-height:17px;font-style:italic">I</div>
<div class="t" style="left:529px;top:335px;font-family:'Liberation Sans';font-size:15px;line-height:17px;text-decoration:underline">U</div>
<div class="t" style="left:552px;top:335px;font-family:'Liberation Serif';font-size:15px;line-height:17px;font-style:italic;text-decoration:line-through">S</div>
<svg style="left:581px;top:336px;" width="15" height="15" viewBox="0 0 15 15"><circle cx="9.5" cy="2.5" r="2" fill="#E89040"/><path d="M6,14 V8 Q6,5 9.5,5 Q13,5 13,8 V14Z" fill="#D87020"/><circle cx="5" cy="10" r="3.8" fill="#FFF8C0" stroke="#E0B020" stroke-width="1.2"/><path d="M5,10 L6.5,8.5" stroke="#333" stroke-width=".8"/></svg>
<div class="t" style="left:1091px;top:338px;font-size:11px;line-height:13px;color:#000;">Problem</div>
<svg style="left:1138px;top:336px;" width="17" height="15" viewBox="0 0 17 15"><path d="M0.5,1.5 H10.5 V9 L7.5,12.5 H0.5Z" fill="#F4E060" stroke="#B8A020" stroke-width=".8"/><path d="M7.5,12.5 V9 H10.5" fill="#C8B030"/><path d="M13.5,1 V8" stroke="#E02020" stroke-width="3" stroke-linecap="round"/><circle cx="13.5" cy="12" r="1.7" fill="#E02020"/></svg>
<div class="a" style="left:478px;top:360px;width:676px;height:71px;background:#fff;border:1px solid #7F9DB9;"></div>
<div class="t" style="left:480px;top:363px;font-size:11px;line-height:13px;color:#000;letter-spacing:-.15px;">Can we use some kind of aid to resolve the problem?</div>
<div class="a" style="left:1135px;top:362px;width:17px;height:67px;background:linear-gradient(90deg,#F2F1EC,#FDFDFB 50%,#EEEDE6);"></div>
<div class="a" style="left:1135px;top:362px;width:17px;height:17px;background:linear-gradient(90deg,#FBFBF8,#F0EFE8);border:1px solid #E4E2D8;border-radius:2px;"></div>
<svg style="left:1135px;top:362px;" width="17" height="17" viewBox="0 0 17 17"><path d="M5,10 L8.5,6.5 L12,10" fill="none" stroke="#C8C6BC" stroke-width="1.8"/></svg>
<div class="a" style="left:1135px;top:412px;width:17px;height:17px;background:linear-gradient(90deg,#FBFBF8,#F0EFE8);border:1px solid #E4E2D8;border-radius:2px;"></div>
<svg style="left:1135px;top:412px;" width="17" height="17" viewBox="0 0 17 17"><path d="M5,7 L8.5,10.5 L12,7" fill="none" stroke="#C8C6BC" stroke-width="1.8"/></svg>
<svg style="left:1280px;top:170px;overflow:hidden;" width="280" height="627" viewBox="0 0 280 627"><defs><clipPath id="sil"><path d="M1419.5,176.5 C1402,176.5 1389,190 1388.5,212 L1388.5,216.5 C1385,216 1384.5,220 1385,225 C1386,231 1390,235 1393.8,236 C1396,245 1397,252 1399,256 C1399.5,259 1399,262 1398.5,264 C1390,270 1378,275 1367,277.6 C1355,281 1345,287 1338,297 C1333,304 1331,315 1331,327 L1331,383 C1331,390 1326,396 1324,399 C1321,405 1320.5,412 1320.5,420 L1320,438 L1318.2,465 C1316,475 1312,480 1310.5,484 L1295.5,504 C1293,508 1292.5,512 1294,514.5 C1296,516.5 1299,515.5 1305.5,508 L1306,533 C1307,536 1310,536 1311,533 L1312,511 L1314.8,534 C1316,537 1319,537 1319.5,534 L1320,511 L1321.6,532 C1322.5,534.5 1325,534.5 1325.8,532 L1326.7,511 L1328.4,524.5 C1329.5,527 1332,527 1332.6,524.5 L1333.5,480.5 C1334,474 1337,468 1339.4,465 C1345,455 1350,446 1353,438 C1357,428 1360,420 1361,412.5 C1362.5,402 1363,395 1362.4,387 L1364,368 C1367,380 1369,392 1369.2,404 L1369.2,438 C1368,452 1365,462 1363,472 C1360,482 1358,490 1357.8,500 L1357.5,532 C1358,555 1360,575 1362,588.5 C1365,597 1368,604 1368.4,610 L1368.4,644.7 C1368,660 1366.8,668 1366.8,676 C1368,690 1372,700 1374.6,707 C1379,722 1384,738 1387,750.7 C1388.5,757 1390,762 1390,766 C1387,771 1381,776 1380.9,782 C1381,787 1383,789.7 1386,789.7 L1412,789.7 C1415,789.7 1416,786 1415.6,783 C1415,775 1415.2,770 1415.2,766 C1414.5,755 1412.5,745 1412,735 C1411.5,720 1410.5,705 1410.5,688 C1411,678 1415,670 1415,663.4 C1414,657 1409,652 1409,647.8 C1409,635 1411.5,620 1412,604 C1413.5,580 1416,555 1418.3,541.7 L1419,541.7 L1419,176.5 Z"/><path d="M1419.5,176.5 C1402,176.5 1389,190 1388.5,212 L1388.5,216.5 C1385,216 1384.5,220 1385,225 C1386,231 1390,235 1393.8,236 C1396,245 1397,252 1399,256 C1399.5,259 1399,262 1398.5,264 C1390,270 1378,275 1367,277.6 C1355,281 1345,287 1338,297 C1333,304 1331,315 1331,327 L1331,383 C1331,390 1326,396 1324,399 C1321,405 1320.5,412 1320.5,420 L1320,438 L1318.2,465 C1316,475 1312,480 1310.5,484 L1295.5,504 C1293,508 1292.5,512 1294,514.5 C1296,516.5 1299,515.5 1305.5,508 L1306,533 C1307,536 1310,536 1311,533 L1312,511 L1314.8,534 C1316,537 1319,537 1319.5,534 L1320,511 L1321.6,532 C1322.5,534.5 1325,534.5 1325.8,532 L1326.7,511 L1328.4,524.5 C1329.5,527 1332,527 1332.6,524.5 L1333.5,480.5 C1334,474 1337,468 1339.4,465 C1345,455 1350,446 1353,438 C1357,428 1360,420 1361,412.5 C1362.5,402 1363,395 1362.4,387 L1364,368 C1367,380 1369,392 1369.2,404 L1369.2,438 C1368,452 1365,462 1363,472 C1360,482 1358,490 1357.8,500 L1357.5,532 C1358,555 1360,575 1362,588.5 C1365,597 1368,604 1368.4,610 L1368.4,644.7 C1368,660 1366.8,668 1366.8,676 C1368,690 1372,700 1374.6,707 C1379,722 1384,738 1387,750.7 C1388.5,757 1390,762 1390,766 C1387,771 1381,776 1380.9,782 C1381,787 1383,789.7 1386,789.7 L1412,789.7 C1415,789.7 1416,786 1415.6,783 C1415,775 1415.2,770 1415.2,766 C1414.5,755 1412.5,745 1412,735 C1411.5,720 1410.5,705 1410.5,688 C1411,678 1415,670 1415,663.4 C1414,657 1409,652 1409,647.8 C1409,635 1411.5,620 1412,604 C1413.5,580 1416,555 1418.3,541.7 L1419,541.7 L1419,176.5 Z" transform="translate(2838,0) scale(-1,1)"/></clipPath></defs><g transform="translate(-1280,-170)"><g clip-path="url(#sil)"><rect x="1280" y="170" width="280" height="630" fill="#fff"/><path d="M1300,236 H1393 C1402,232 1410,213 1419,213 C1428,213 1436,232 1445,236 H1540 V330 H1300Z" fill="#CFD0D4"/><path d="M1300,283 L1356,285 C1360,290 1362,292 1365,293.6 C1372,296 1378,297 1382,298 C1390,301 1396,305 1401,307.8 L1419,316 L1437,307.8 C1442,305 1448,301 1456,298 C1460,297 1466,296 1473,293.6 C1476,292 1478,290 1482,285 L1540,283 V342 L1506,341.8 C1502,346 1498,351 1493,353 L1473,356 C1468,360 1462,366 1457.5,368.3 L1438.6,372 L1399.4,372 L1380.5,368.3 C1376,366 1370,360 1365,356 L1345,353 C1340,351 1336,346 1332.3,341.8 L1300,342Z" fill="#B8BABE"/><ellipse cx="1419" cy="355" rx="20" ry="72" fill="#A5A8AC"/><path d="M1290,380 Q1330,368 1365,380 L1365,441 Q1335,430 1290,437Z" fill="#CFD0D4"/><path d="M1290,380 Q1330,368 1365,380 L1365,441 Q1335,430 1290,437Z" fill="#CFD0D4" transform="translate(2838,0) scale(-1,1)"/><path d="M1285,470 Q1320,458 1345,468 L1345,545 H1285Z" fill="#B8BABE"/><path d="M1285,470 Q1320,458 1345,468 L1345,545 H1285Z" fill="#B8BABE" transform="translate(2838,0) scale(-1,1)"/><rect x="1340" y="466" width="160" height="116" fill="#A5A8AC"/><path d="M1340,604 Q1419,606 1500,604 V677.5 Q1419,676 1340,677.5Z" fill="#B8BABE"/><path d="M1340,708.5 Q1419,707 1500,708.5 V800 H1340Z" fill="#CFD0D4"/></g><ellipse cx="1418.5" cy="470" rx="58" ry="34" fill="#fff"/><path d="M1418.5,504 V542" stroke="#D0D0D0" stroke-width="1"/><ellipse cx="1418.2" cy="469" rx="51" ry="28.8" fill="#FF0000" stroke="#300" stroke-width=".8"/><path d="M1419.5,176.5 C1402,176.5 1389,190 1388.5,212 L1388.5,216.5 C1385,216 1384.5,220 1385,225 C1386,231 1390,235 1393.8,236 C1396,245 1397,252 1399,256 C1399.5,259 1399,262 1398.5,264 C1390,270 1378,275 1367,277.6 C1355,281 1345,287 1338,297 C1333,304 1331,315 1331,327 L1331,383 C1331,390 1326,396 1324,399 C1321,405 1320.5,412 1320.5,420 L1320,438 L1318.2,465 C1316,475 1312,480 1310.5,484 L1295.5,504 C1293,508 1292.5,512 1294,514.5 C1296,516.5 1299,515.5 1305.5,508 L1306,533 C1307,536 1310,536 1311,533 L1312,511 L1314.8,534 C1316,537 1319,537 1319.5,534 L1320,511 L1321.6,532 C1322.5,534.5 1325,534.5 1325.8,532 L1326.7,511 L1328.4,524.5 C1329.5,527 1332,527 1332.6,524.5 L1333.5,480.5 C1334,474 1337,468 1339.4,465 C1345,455 1350,446 1353,438 C1357,428 1360,420 1361,412.5 C1362.5,402 1363,395 1362.4,387 L1364,368" fill="none" stroke="#000" stroke-width="1.4" stroke-linejoin="round"/><path d="M1419.5,176.5 C1402,176.5 1389,190 1388.5,212 L1388.5,216.5 C1385,216 1384.5,220 1385,225 C1386,231 1390,235 1393.8,236 C1396,245 1397,252 1399,256 C1399.5,259 1399,262 1398.5,264 C1390,270 1378,275 1367,277.6 C1355,281 1345,287 1338,297 C1333,304 1331,315 1331,327 L1331,383 C1331,390 1326,396 1324,399 C1321,405 1320.5,412 1320.5,420 L1320,438 L1318.2,465 C1316,475 1312,480 1310.5,484 L1295.5,504 C1293,508 1292.5,512 1294,514.5 C1296,516.5 1299,515.5 1305.5,508 L1306,533 C1307,536 1310,536 1311,533 L1312,511 L1314.8,534 C1316,537 1319,537 1319.5,534 L1320,511 L1321.6,532 C1322.5,534.5 1325,534.5 1325.8,532 L1326.7,511 L1328.4,524.5 C1329.5,527 1332,527 1332.6,524.5 L1333.5,480.5 C1334,474 1337,468 1339.4,465 C1345,455 1350,446 1353,438 C1357,428 1360,420 1361,412.5 C1362.5,402 1363,395 1362.4,387 L1364,368" fill="none" stroke="#000" stroke-width="1.4" stroke-linejoin="round" transform="translate(2838,0) scale(-1,1)"/><path d="M1364,350 L1364,368 C1367,380 1369,392 1369.2,404 L1369.2,438 C1368,452 1365,462 1363,472 C1360,482 1358,490 1357.8,500 L1357.5,532 C1358,555 1360,575 1362,588.5 C1365,597 1368,604 1368.4,610 L1368.4,644.7 C1368,660 1366.8,668 1366.8,676 C1368,690 1372,700 1374.6,707 C1379,722 1384,738 1387,750.7 C1388.5,757 1390,762 1390,766 C1387,771 1381,776 1380.9,782 C1381,787 1383,789.7 1386,789.7 L1412,789.7 C1415,789.7 1416,786 1415.6,783 C1415,775 1415.2,770 1415.2,766 C1414.5,755 1412.5,745 1412,735 C1411.5,720 1410.5,705 1410.5,688 C1411,678 1415,670 1415,663.4 C1414,657 1409,652 1409,647.8 C1409,635 1411.5,620 1412,604 C1413.5,580 1416,555 1418.3,541.7" fill="none" stroke="#000" stroke-width="1.4" stroke-linejoin="round"/><path d="M1364,350 L1364,368 C1367,380 1369,392 1369.2,404 L1369.2,438 C1368,452 1365,462 1363,472 C1360,482 1358,490 1357.8,500 L1357.5,532 C1358,555 1360,575 1362,588.5 C1365,597 1368,604 1368.4,610 L1368.4,644.7 C1368,660 1366.8,668 1366.8,676 C1368,690 1372,700 1374.6,707 C1379,722 1384,738 1387,750.7 C1388.5,757 1390,762 1390,766 C1387,771 1381,776 1380.9,782 C1381,787 1383,789.7 1386,789.7 L1412,789.7 C1415,789.7 1416,786 1415.6,783 C1415,775 1415.2,770 1415.2,766 C1414.5,755 1412.5,745 1412,735 C1411.5,720 1410.5,705 1410.5,688 C1411,678 1415,670 1415,663.4 C1414,657 1409,652 1409,647.8 C1409,635 1411.5,620 1412,604 C1413.5,580 1416,555 1418.3,541.7" fill="none" stroke="#000" stroke-width="1.4" stroke-linejoin="round" transform="translate(2838,0) scale(-1,1)"/></g></svg>
<div class="t" style="left:1416px;top:463px;font-size:12px;line-height:14px;color:#000;font-weight:700;">7</div>
<div class="a" style="left:1450px;top:464px;width:223px;height:289px;background:#F5F5F5;border:1px solid #000;"></div>
<div class="a" style="left:1451px;top:465px;width:16px;height:287px;background:#E6ECEC;"></div>
<div class="t" style="left:1475px;top:470px;font-size:11px;line-height:13px;color:#000;">Select degree of strain for</div>
<div class="t" style="left:1475px;top:482px;font-size:11px;line-height:13px;color:#000;">lower back</div>
<div class="a" style="left:1451px;top:499px;width:221px;height:1px;background:#A7C3EE;"></div>
<div class="t" style="left:1475px;top:505px;font-size:11px;line-height:13px;color:#000;">Reset Strain level</div>
<div class="a" style="left:1471px;top:523px;width:187px;height:17px;background:#00FF00;"></div>
<div class="t" style="left:1475px;top:526px;font-size:11px;line-height:13px;color:#000;letter-spacing:-.1px;">0 - Nothing at all</div>
<div class="a" style="left:1471px;top:544px;width:187px;height:17px;background:#00FF80;"></div>
<div class="t" style="left:1475px;top:547px;font-size:11px;line-height:13px;color:#000;letter-spacing:-.1px;">1 - Very weak</div>
<div class="a" style="left:1471px;top:565px;width:187px;height:17px;background:#00FF80;"></div>
<div class="t" style="left:1475px;top:568px;font-size:11px;line-height:13px;color:#000;letter-spacing:-.1px;">2 - Weak (light)</div>
<div class="a" style="left:1471px;top:586px;width:187px;height:17px;background:#FFFF80;"></div>
<div class="t" style="left:1475px;top:589px;font-size:11px;line-height:13px;color:#000;letter-spacing:-.1px;">3 - Moderate</div>
<div class="a" style="left:1471px;top:607px;width:187px;height:17px;background:#FFFF80;"></div>
<div class="t" style="left:1475px;top:610px;font-size:11px;line-height:13px;color:#000;letter-spacing:-.1px;">4 - Somewhat strong</div>
<div class="a" style="left:1471px;top:628px;width:187px;height:17px;background:#FF8080;"></div>
<div class="t" style="left:1475px;top:631px;font-size:11px;line-height:13px;color:#000;letter-spacing:-.1px;">5 - Strong (heavy)</div>
<div class="a" style="left:1471px;top:649px;width:187px;height:17px;background:#FF0000;"></div>
<div class="t" style="left:1475px;top:652px;font-size:11px;line-height:13px;color:#000;letter-spacing:-.1px;">6 -</div>
<div class="a" style="left:1471px;top:670px;width:187px;height:17px;background:#FF0000;"></div>
<div class="t" style="left:1475px;top:673px;font-size:11px;line-height:13px;color:#000;letter-spacing:-.1px;">7 - Very strong</div>
<div class="a" style="left:1471px;top:691px;width:187px;height:17px;background:#FF0000;"></div>
<div class="t" style="left:1475px;top:694px;font-size:11px;line-height:13px;color:#000;letter-spacing:-.1px;">8 -</div>
<div class="a" style="left:1471px;top:712px;width:187px;height:17px;background:#FF0000;"></div>
<div class="t" style="left:1475px;top:715px;font-size:11px;line-height:13px;color:#000;letter-spacing:-.1px;">9 -</div>
<div class="a" style="left:1471px;top:733px;width:187px;height:17px;background:#FF0000;"></div>
<div class="t" style="left:1475px;top:736px;font-size:11px;line-height:13px;color:#000;letter-spacing:-.1px;">10 - Extremly strong (almost maximal)</div></body></html>
